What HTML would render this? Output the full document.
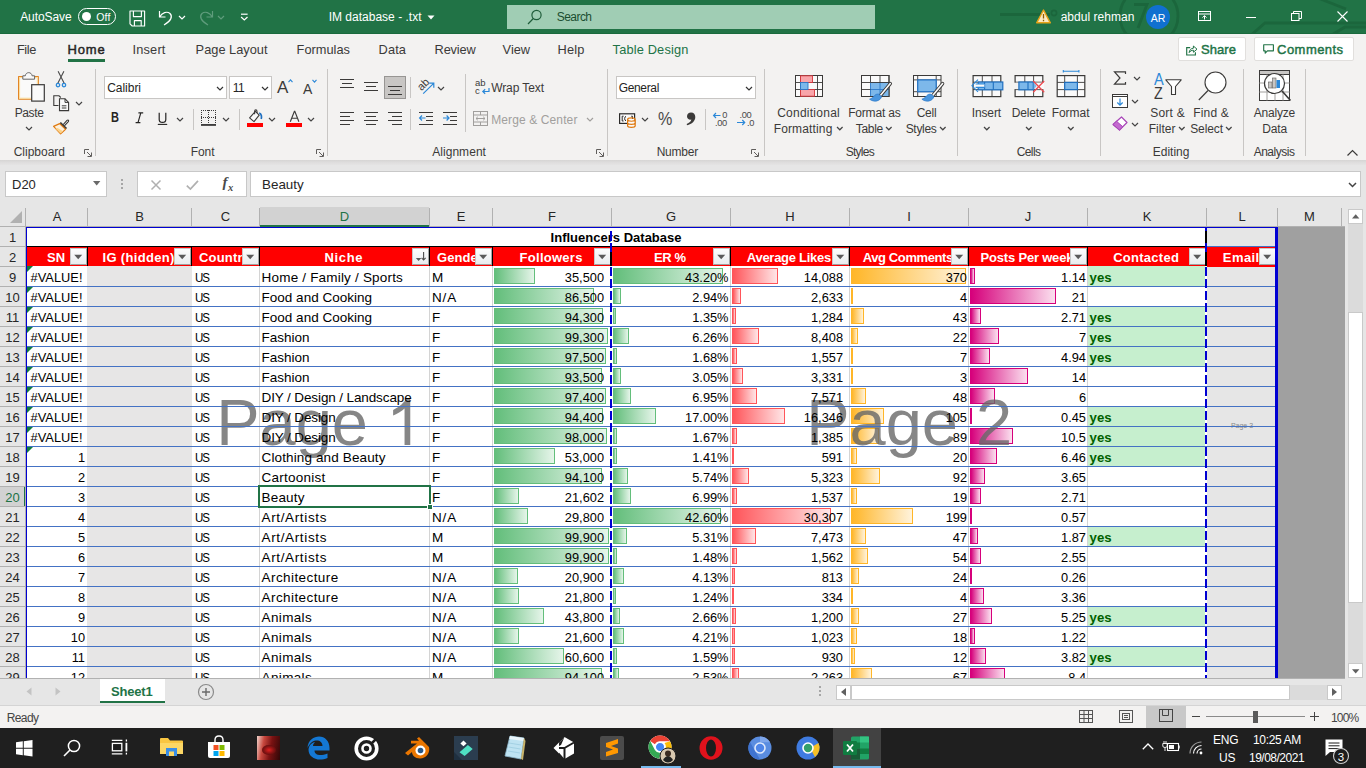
<!DOCTYPE html>
<html lang="en"><head><meta charset="utf-8"><title>IM database - Excel</title>
<style>
*{box-sizing:border-box}
html,body{margin:0;padding:0}
body{width:1366px;height:768px;overflow:hidden;position:relative;background:#f3f2f1;font-family:"Liberation Sans",sans-serif;font-size:12px;color:#262626}
.b{position:absolute;display:block}
.t{position:absolute;white-space:nowrap;line-height:1.3}
svg{overflow:visible}
</style></head>
<body>
<div class="b" style="left:0px;top:0px;width:1366px;height:34px;background:#217346;"></div>
<div class="b" style="left:0px;top:33px;width:1366px;height:1px;background:#1a6a3d;"></div>
<svg class="b" style="left:1000px;top:0" width="366" height="33" viewBox="0 0 366 33"><g fill="none" stroke="#1b663c" stroke-width="2.8"><circle cx="149" cy="16" r="29"/><path d="M0 14.5 H50"/><circle cx="54" cy="13" r="2.6" stroke-width="1.6"/><path d="M134 4.5 H147 L138 28"/><path d="M250 36 L265 23 H366 M330 36 L345 27 H366 M318 -2 L346 9"/></g></svg>
<div class="t" style="left:20.16px;top:10px;font-size:12px;color:#fff;letter-spacing:-0.087px;">AutoSave</div>
<div class="b" style="left:78px;top:8px;width:38px;height:17px;border:1px solid #fff;border-radius:9px;"></div>
<div class="b" style="left:82px;top:12px;width:9px;height:9px;background:#fff;border-radius:50%;"></div>
<div class="t" style="left:96.27px;top:11px;font-size:10.5px;color:#fff;letter-spacing:0.121px;">Off</div>
<svg class="b" style="left:129px;top:9.5px;" width="17" height="17" viewBox="0 0 17 17"><path d="M1 1 H15.6 V16 H3.2 L1 13.8 Z M4.4 1 V6.6 H12.4 V1 M5.4 16 V10.6 H12.2 V16" fill="none" stroke="#fff" stroke-width="1.15" stroke-linejoin="round"/></svg>
<svg class="b" style="left:158px;top:9px;" width="16" height="17" viewBox="0 0 16 17"><path d="M1.5 2 V8 H7.5 M1.8 7.8 C4 3.5 9 2 12 4.5 C15 7.5 13 12 6 16" fill="none" stroke="#fff" stroke-width="1.2"/></svg>
<svg class="b" style="left:178.0px;top:14.5px" width="8" height="5.0" viewBox="-1 -1 8 5.0"><path d="M0 0 L3.0 3.0 L6 0" fill="none" stroke="#fff" stroke-width="1.2"/></svg>
<svg class="b" style="left:198px;top:9px;" width="16" height="17" viewBox="0 0 16 17"><path d="M14.5 2 V8 H8.5 M14.2 7.8 C12 3.5 7 2 4 4.5 C1 7.5 3 12 10 16" fill="none" stroke="#5f9c7c" stroke-width="1.2"/></svg>
<svg class="b" style="left:217.0px;top:14.5px" width="8" height="5.0" viewBox="-1 -1 8 5.0"><path d="M0 0 L3.0 3.0 L6 0" fill="none" stroke="#5f9c7c" stroke-width="1.2"/></svg>
<svg class="b" style="left:239.5px;top:13px;" width="9" height="9" viewBox="0 0 9 9"><path d="M1 1.2 H7.6" stroke="#fff" stroke-width="1.2"/><path d="M1.1 4 L4.3 7 L7.5 4" fill="none" stroke="#fff" stroke-width="1.2"/></svg>
<div class="t" style="left:328.66px;top:10px;font-size:12px;color:#fff;letter-spacing:0.008px;">IM database - .txt</div>
<svg class="b" style="left:427px;top:15px" width="8" height="5"><path d="M0.5 0.5 H7.5 L4 4.5 Z" fill="#fff"/></svg>
<div class="b" style="left:507px;top:5px;width:368px;height:24px;background:#a0cdb4;"></div>
<svg class="b" style="left:527px;top:9px;" width="16" height="16" viewBox="0 0 16 16"><circle cx="9.5" cy="6" r="4.6" fill="none" stroke="#1f5c3a" stroke-width="1.2"/><path d="M6.3 9.5 L1 15" stroke="#1f5c3a" stroke-width="1.2"/></svg>
<div class="t" style="left:556.66px;top:10px;font-size:12px;color:#1b4d31;letter-spacing:-0.53px;">Search</div>
<svg class="b" style="left:1036px;top:9px;" width="15" height="15" viewBox="0 0 15 15"><path d="M7.5 1 L14.3 13.8 H0.7 Z" fill="#fce9c0" stroke="#e8a317" stroke-width="1.4" stroke-linejoin="round"/><path d="M7.5 5 V9.6 M7.5 10.8 V12.3" stroke="#8a5a00" stroke-width="1.3"/></svg>
<div class="t" style="left:1060.66px;top:10px;font-size:12px;color:#fff;letter-spacing:0.038px;">abdul rehman</div>
<div class="b" style="left:1146px;top:5px;width:24px;height:24px;background:#1070d0;border-radius:50%;"></div>
<div class="t" style="left:1146px;top:12px;font-size:10.5px;color:#fff;width:24px;text-align:center;">AR</div>
<svg class="b" style="left:1198px;top:11px;" width="13" height="10" viewBox="0 0 13 10"><rect x="0.5" y="0.5" width="12" height="9" fill="none" stroke="#fff"/><path d="M0.5 3 H12.5" stroke="#fff"/><path d="M6.5 8.5 V4.8 M4.5 6.6 L6.5 4.6 L8.5 6.6" fill="none" stroke="#fff"/></svg>
<div class="b" style="left:1246px;top:17px;width:10px;height:1px;background:#fff;"></div>
<svg class="b" style="left:1291px;top:11px;" width="11" height="10" viewBox="0 0 11 10"><rect x="0.5" y="2.5" width="7.5" height="7" fill="none" stroke="#fff"/><path d="M2.5 2.5 V0.5 H10.5 V7.5 H8" fill="none" stroke="#fff"/></svg>
<svg class="b" style="left:1337px;top:11px;" width="11" height="11" viewBox="0 0 11 11"><path d="M0.5 0.5 L10.5 10.5 M10.5 0.5 L0.5 10.5" stroke="#fff" stroke-width="1.1"/></svg>
<div class="b" style="left:0px;top:34px;width:1366px;height:30px;background:#f3f2f1;"></div>
<div class="t" style="left:16.9px;top:42px;font-size:12.8px;color:#3b3a39;letter-spacing:-0.373px;">File</div>
<div class="t" style="left:132.6px;top:42px;font-size:12.8px;color:#3b3a39;letter-spacing:0.153px;">Insert</div>
<div class="t" style="left:195.6px;top:42px;font-size:12.8px;color:#3b3a39;letter-spacing:0.005px;">Page Layout</div>
<div class="t" style="left:296.6px;top:42px;font-size:12.8px;color:#3b3a39;letter-spacing:0.011px;">Formulas</div>
<div class="t" style="left:378.6px;top:42px;font-size:12.8px;color:#3b3a39;letter-spacing:0.099px;">Data</div>
<div class="t" style="left:434.6px;top:42px;font-size:12.8px;color:#3b3a39;letter-spacing:-0.173px;">Review</div>
<div class="t" style="left:502.6px;top:42px;font-size:12.8px;color:#3b3a39;letter-spacing:-0.02px;">View</div>
<div class="t" style="left:557.6px;top:42px;font-size:12.8px;color:#3b3a39;letter-spacing:0.152px;">Help</div>
<div class="t" style="left:67.59px;top:42px;font-size:13px;color:#252423;letter-spacing:0.819px;-webkit-text-stroke:0.45px #252423;">Home</div>
<div class="b" style="left:68px;top:59px;width:37px;height:3px;background:#217346;"></div>
<div class="t" style="left:612.6px;top:42px;font-size:12.8px;color:#217346;letter-spacing:0.161px;">Table Design</div>
<div class="b" style="left:1178px;top:37px;width:68px;height:24px;background:#fff;border:1px solid #e1dfdd;border-radius:2px;"></div>
<svg class="b" style="left:1186px;top:43.5px;" width="12" height="12" viewBox="0 0 12 12"><path d="M4.2 3.6 H0.7 V11 H9.4 V8.2" fill="none" stroke="#217346" stroke-width="1.15"/><path d="M3.2 8.6 C3.4 5.8 5 4.4 7.4 4.2 V2 L11 5.2 L7.4 8.2 V6.2 C5.6 6.2 4.2 7 3.2 8.6 Z" fill="none" stroke="#217346" stroke-width="1" stroke-linejoin="round"/></svg>
<div class="t" style="left:1201.09px;top:42px;font-size:13px;color:#217346;letter-spacing:0.053px;-webkit-text-stroke:0.45px #217346;">Share</div>
<div class="b" style="left:1254px;top:37px;width:100px;height:24px;background:#fff;border:1px solid #e1dfdd;border-radius:2px;"></div>
<svg class="b" style="left:1262.5px;top:44px;" width="12" height="11" viewBox="0 0 12 11"><path d="M0.7 0.7 H10.4 V6.8 H4.4 L2.2 9.2 V6.8 H0.7 Z" fill="none" stroke="#217346" stroke-width="1.15" stroke-linejoin="round"/></svg>
<div class="t" style="left:1277.09px;top:42px;font-size:13px;color:#217346;letter-spacing:0.451px;-webkit-text-stroke:0.45px #217346;">Comments</div>
<div class="b" style="left:0px;top:64px;width:1366px;height:96px;background:#f3f2f1;"></div>
<div class="b" style="left:0px;top:160px;width:1366px;height:6px;background:linear-gradient(#d6d5d4,#e0dfdf 50%,#e6e6e6);"></div>
<div class="b" style="left:95px;top:69px;width:1px;height:87px;background:#c8c6c4;"></div>
<div class="b" style="left:327px;top:69px;width:1px;height:87px;background:#c8c6c4;"></div>
<div class="b" style="left:607px;top:69px;width:1px;height:87px;background:#c8c6c4;"></div>
<div class="b" style="left:764px;top:69px;width:1px;height:87px;background:#c8c6c4;"></div>
<div class="b" style="left:957px;top:69px;width:1px;height:87px;background:#c8c6c4;"></div>
<div class="b" style="left:1100px;top:69px;width:1px;height:87px;background:#c8c6c4;"></div>
<div class="b" style="left:1243px;top:69px;width:1px;height:87px;background:#c8c6c4;"></div>
<div class="b" style="left:1305px;top:69px;width:1px;height:87px;background:#c8c6c4;"></div>
<div class="t" style="left:13.66px;top:145px;font-size:12px;color:#3b3a39;letter-spacing:-0.002px;">Clipboard</div>
<div class="t" style="left:190.66px;top:145px;font-size:12px;color:#3b3a39;letter-spacing:-0.042px;">Font</div>
<div class="t" style="left:432.16px;top:145px;font-size:12px;color:#3b3a39;letter-spacing:0.053px;">Alignment</div>
<div class="t" style="left:656.66px;top:145px;font-size:12px;color:#3b3a39;letter-spacing:-0.223px;">Number</div>
<div class="t" style="left:845.66px;top:145px;font-size:12px;color:#3b3a39;letter-spacing:-0.722px;">Styles</div>
<div class="t" style="left:1016.66px;top:145px;font-size:12px;color:#3b3a39;letter-spacing:-0.566px;">Cells</div>
<div class="t" style="left:1152.66px;top:145px;font-size:12px;color:#3b3a39;letter-spacing:0.022px;">Editing</div>
<div class="t" style="left:1253.66px;top:145px;font-size:12px;color:#3b3a39;letter-spacing:-0.48px;">Analysis</div>
<svg class="b" style="left:84px;top:149px;" width="8" height="8" viewBox="0 0 8 8"><path d="M0.5 5 V0.5 H5" fill="none" stroke="#605e5c"/><path d="M3 3 L7 7 M7.5 3.5 V7.5 H3.5" fill="none" stroke="#605e5c"/></svg>
<svg class="b" style="left:316px;top:149px;" width="8" height="8" viewBox="0 0 8 8"><path d="M0.5 5 V0.5 H5" fill="none" stroke="#605e5c"/><path d="M3 3 L7 7 M7.5 3.5 V7.5 H3.5" fill="none" stroke="#605e5c"/></svg>
<svg class="b" style="left:596px;top:149px;" width="8" height="8" viewBox="0 0 8 8"><path d="M0.5 5 V0.5 H5" fill="none" stroke="#605e5c"/><path d="M3 3 L7 7 M7.5 3.5 V7.5 H3.5" fill="none" stroke="#605e5c"/></svg>
<svg class="b" style="left:751px;top:149px;" width="8" height="8" viewBox="0 0 8 8"><path d="M0.5 5 V0.5 H5" fill="none" stroke="#605e5c"/><path d="M3 3 L7 7 M7.5 3.5 V7.5 H3.5" fill="none" stroke="#605e5c"/></svg>
<svg class="b" style="left:1347px;top:150px;" width="11" height="6" viewBox="0 0 11 6"><path d="M0.5 5.5 L5.5 0.5 L10.5 5.5" fill="none" stroke="#3b3a39" stroke-width="1.2"/></svg>
<svg class="b" style="left:17px;top:71px;" width="29" height="31" viewBox="0 0 29 31"><rect x="1.6" y="5.6" width="19.7" height="22.6" fill="#fafafa" stroke="#e07a10" stroke-width="1"/><rect x="2.6" y="6.6" width="17.7" height="20.6" fill="none" stroke="#fbdc9a" stroke-width="1"/><path d="M5.8 8.2 V4.8 H8.3 C8.8 0.6 14.6 0.6 15.1 4.8 H17.6 V8.2 Z" fill="#f8f8f8" stroke="#666" stroke-width="1"/><rect x="14.7" y="13.7" width="12.6" height="16.4" fill="#fafafa" stroke="#3b3a39" stroke-width="1.2"/></svg>
<div class="t" style="left:14.66px;top:106px;font-size:12px;color:#3b3a39;letter-spacing:-0.368px;">Paste</div>
<svg class="b" style="left:24.5px;top:126.0px" width="8" height="5.0" viewBox="-1 -1 8 5.0"><path d="M0 0 L3.0 3.0 L6 0" fill="none" stroke="#444" stroke-width="1.2"/></svg>
<svg class="b" style="left:55px;top:71px;" width="12" height="17" viewBox="0 0 12 17"><path d="M3.1 0.3 L9.3 12.4 M8.9 0.3 L2.7 12.4" stroke="#4a4a4a" stroke-width="1.1" fill="none"/><circle cx="3" cy="14.1" r="1.7" fill="none" stroke="#2b88d8" stroke-width="1.3"/><circle cx="9" cy="14.1" r="1.7" fill="none" stroke="#2b88d8" stroke-width="1.3"/></svg>
<svg class="b" style="left:53px;top:95px;" width="17" height="17" viewBox="0 0 17 17"><path d="M5.5 10.5 H0.8 V0.8 H6 L7.8 2.5" fill="none" stroke="#3b3a39" stroke-width="1.1"/><path d="M6.5 3.8 H12 L15.6 7.4 V15.6 H6.5 Z" fill="#fafafa" stroke="#3b3a39" stroke-width="1.1"/><path d="M12 3.8 V7.4 H15.6 M8.8 10.8 H13.4 M8.8 13 H13.4" fill="none" stroke="#3b3a39" stroke-width="1"/></svg>
<svg class="b" style="left:74.5px;top:100.5px" width="8" height="5.0" viewBox="-1 -1 8 5.0"><path d="M0 0 L3.0 3.0 L6 0" fill="none" stroke="#444" stroke-width="1.2"/></svg>
<svg class="b" style="left:53px;top:118px;" width="17" height="17" viewBox="0 0 17 17"><path d="M10.2 6.6 L14 2.4 C15 1.4 16.2 2.6 15.3 3.7 L11.4 7.8" fill="#fafafa" stroke="#3b3a39" stroke-width="1.1"/><path d="M7.2 4.6 L13.4 10.6" stroke="#3b3a39" stroke-width="2"/><path d="M6.6 5.6 L0.6 8.4 L7.6 15.8 L12.6 11.4 Z" fill="#fdf1de" stroke="#e07a10" stroke-width="1.2" stroke-linejoin="round"/><path d="M2.4 10.6 L7.6 15.4 L10 13.2 L4.6 10 Z" fill="#fbd28a"/></svg>
<div class="b" style="left:104px;top:76px;width:123px;height:23px;background:#fff;border:1px solid #c8c6c4;"></div>
<div class="t" style="left:107.16px;top:81px;font-size:12px;color:#252423;letter-spacing:-0.024px;">Calibri</div>
<svg class="b" style="left:216.0px;top:85.5px" width="8" height="5.0" viewBox="-1 -1 8 5.0"><path d="M0 0 L3.0 3.0 L6 0" fill="none" stroke="#333" stroke-width="1.2"/></svg>
<div class="b" style="left:229px;top:76px;width:43px;height:23px;background:#fff;border:1px solid #c8c6c4;"></div>
<div class="t" style="left:232.66px;top:81px;font-size:12px;color:#252423;letter-spacing:-0.557px;">11</div>
<svg class="b" style="left:260.5px;top:85.5px" width="8" height="5.0" viewBox="-1 -1 8 5.0"><path d="M0 0 L3.0 3.0 L6 0" fill="none" stroke="#333" stroke-width="1.2"/></svg>
<div class="t" style="left:277px;top:77px;font-size:17px;color:#3b3a39;">A</div>
<svg class="b" style="left:288px;top:79px;" width="5" height="4" viewBox="0 0 5 4"><path d="M0.5 3.2 L2.5 0.8 L4.5 3.2" fill="none" stroke="#2b88d8" stroke-width="1.1"/></svg>
<div class="t" style="left:303px;top:80px;font-size:14px;color:#3b3a39;">A</div>
<svg class="b" style="left:312px;top:79px;" width="5" height="4" viewBox="0 0 5 4"><path d="M0.5 0.8 L2.5 3.2 L4.5 0.8" fill="none" stroke="#2b88d8" stroke-width="1.1"/></svg>
<div class="t" style="left:111.2px;top:108.5px;font-size:13.8px;color:#252423;font-weight:700;transform:scaleX(0.8);transform-origin:0 0;">B</div>
<svg class="b" style="left:135px;top:112px;" width="9" height="12" viewBox="0 0 9 12"><path d="M3.4 0.9 H8.2 M0.6 10.6 H5.4 M5.8 0.9 L3 10.6" fill="none" stroke="#252423" stroke-width="1.15"/></svg>
<svg class="b" style="left:157px;top:112px;" width="11" height="14" viewBox="0 0 11 14"><path d="M2.2 0.8 V7.4 C2.2 11.3 8.8 11.3 8.8 7.4 V0.8" fill="none" stroke="#252423" stroke-width="1.2"/><path d="M0.8 12.4 H10.2" stroke="#252423" stroke-width="1.1"/></svg>
<svg class="b" style="left:176.0px;top:116.5px" width="8" height="5.0" viewBox="-1 -1 8 5.0"><path d="M0 0 L3.0 3.0 L6 0" fill="none" stroke="#444" stroke-width="1.2"/></svg>
<div class="b" style="left:193px;top:109px;width:1px;height:21px;background:#c8c6c4;"></div>
<svg class="b" style="left:201px;top:110px;" width="16" height="16" viewBox="0 0 16 16"><path d="M0 0.5 H15 M0 7.5 H15" fill="none" stroke="#3b3a39" stroke-width="1" stroke-dasharray="1 1"/><path d="M0.5 0 V13 M7.5 0 V13 M14.5 0 V13" fill="none" stroke="#3b3a39" stroke-width="1" stroke-dasharray="1 1"/><rect x="0" y="14.2" width="15" height="1.5" fill="#111"/></svg>
<svg class="b" style="left:222.0px;top:116.5px" width="8" height="5.0" viewBox="-1 -1 8 5.0"><path d="M0 0 L3.0 3.0 L6 0" fill="none" stroke="#444" stroke-width="1.2"/></svg>
<div class="b" style="left:239px;top:109px;width:1px;height:21px;background:#c8c6c4;"></div>
<svg class="b" style="left:247px;top:108px;" width="16" height="20" viewBox="0 0 16 20"><path d="M2.6 9.8 L8.4 3.4 L12.2 7.2 L7 13.6 Z" fill="#fafafa" stroke="#3b3a39" stroke-width="1.1" stroke-linejoin="round"/><path d="M7.6 6.2 V3.4 C7.6 1.4 10 1.4 10 3.4 V5" fill="none" stroke="#3b3a39" stroke-width="1.1"/><path d="M12.2 5.2 C14.6 5.6 14.8 8.8 14.2 11" fill="none" stroke="#1e6fc0" stroke-width="1.7"/><rect x="0" y="15" width="16" height="4" fill="#ff0000"/></svg>
<svg class="b" style="left:268.0px;top:116.5px" width="8" height="5.0" viewBox="-1 -1 8 5.0"><path d="M0 0 L3.0 3.0 L6 0" fill="none" stroke="#444" stroke-width="1.2"/></svg>
<svg class="b" style="left:286px;top:108px;" width="16" height="20" viewBox="0 0 16 20"><path d="M4.3 13.8 L8.4 3.2 H8.8 L12.9 13.8 M5.7 10.2 H11.5" fill="none" stroke="#3b3a39" stroke-width="1.15"/><rect x="0" y="15" width="16" height="4" fill="#ff0000"/></svg>
<svg class="b" style="left:307.0px;top:116.5px" width="8" height="5.0" viewBox="-1 -1 8 5.0"><path d="M0 0 L3.0 3.0 L6 0" fill="none" stroke="#444" stroke-width="1.2"/></svg>
<div class="b" style="left:384px;top:76px;width:22px;height:23px;background:#c8c6c4;border:1px solid #979593;"></div>
<div class="b" style="left:340px;top:79px;width:14px;height:1px;background:#3b3a39;"></div><div class="b" style="left:342px;top:83px;width:10px;height:1px;background:#3b3a39;"></div><div class="b" style="left:340px;top:87px;width:14px;height:1px;background:#3b3a39;"></div>
<div class="b" style="left:364px;top:82px;width:14px;height:1px;background:#3b3a39;"></div><div class="b" style="left:366px;top:86px;width:10px;height:1px;background:#3b3a39;"></div><div class="b" style="left:364px;top:90px;width:14px;height:1px;background:#3b3a39;"></div>
<div class="b" style="left:388px;top:86px;width:14px;height:1px;background:#3b3a39;"></div><div class="b" style="left:390px;top:90px;width:10px;height:1px;background:#3b3a39;"></div><div class="b" style="left:388px;top:94px;width:14px;height:1px;background:#3b3a39;"></div>
<div class="b" style="left:410px;top:77px;width:1px;height:21px;background:#c8c6c4;"></div>
<div class="t" style="left:417px;top:77px;font-size:11px;color:#3b3a39;transform:rotate(-45deg);transform-origin:50% 50%;">ab</div>
<svg class="b" style="left:422px;top:82px;" width="13" height="13" viewBox="0 0 13 13"><path d="M1.2 11.6 L11.4 1.6 M7.2 1.2 H11.8 V5.8" fill="none" stroke="#2b88d8" stroke-width="1.2"/></svg>
<svg class="b" style="left:437.0px;top:85.5px" width="8" height="5.0" viewBox="-1 -1 8 5.0"><path d="M0 0 L3.0 3.0 L6 0" fill="none" stroke="#444" stroke-width="1.2"/></svg>
<div class="b" style="left:465px;top:74px;width:1px;height:58px;background:#c8c6c4;"></div>
<div class="t" style="left:475px;top:77px;font-size:9.5px;color:#3b3a39;">ab</div>
<div class="t" style="left:475px;top:85px;font-size:9.5px;color:#3b3a39;">c</div>
<svg class="b" style="left:481px;top:88px;" width="9" height="8" viewBox="0 0 9 8"><path d="M8 0 V3.5 H2 M4.2 1.2 L1.8 3.5 L4.2 5.8" fill="none" stroke="#2b88d8" stroke-width="1.2"/></svg>
<div class="t" style="left:491.16px;top:81px;font-size:12px;color:#3b3a39;letter-spacing:-0.082px;">Wrap Text</div>
<div class="b" style="left:340px;top:112px;width:14px;height:1px;background:#3b3a39;"></div><div class="b" style="left:340px;top:116px;width:10px;height:1px;background:#3b3a39;"></div><div class="b" style="left:340px;top:120px;width:14px;height:1px;background:#3b3a39;"></div><div class="b" style="left:340px;top:124px;width:10px;height:1px;background:#3b3a39;"></div>
<div class="b" style="left:364px;top:112px;width:14px;height:1px;background:#3b3a39;"></div><div class="b" style="left:366px;top:116px;width:10px;height:1px;background:#3b3a39;"></div><div class="b" style="left:364px;top:120px;width:14px;height:1px;background:#3b3a39;"></div><div class="b" style="left:366px;top:124px;width:10px;height:1px;background:#3b3a39;"></div>
<div class="b" style="left:388px;top:112px;width:14px;height:1px;background:#3b3a39;"></div><div class="b" style="left:392px;top:116px;width:10px;height:1px;background:#3b3a39;"></div><div class="b" style="left:388px;top:120px;width:14px;height:1px;background:#3b3a39;"></div><div class="b" style="left:392px;top:124px;width:10px;height:1px;background:#3b3a39;"></div>
<div class="b" style="left:410px;top:109px;width:1px;height:21px;background:#c8c6c4;"></div>
<div class="b" style="left:419px;top:112px;width:14px;height:1px;background:#3b3a39;"></div><div class="b" style="left:426px;top:116px;width:7px;height:1px;background:#3b3a39;"></div><div class="b" style="left:426px;top:120px;width:7px;height:1px;background:#3b3a39;"></div><div class="b" style="left:419px;top:124px;width:14px;height:1px;background:#3b3a39;"></div>
<svg class="b" style="left:419px;top:114px;" width="7" height="8" viewBox="0 0 7 8"><path d="M6.5 4 H0.8 M3 1.5 L0.6 4 L3 6.5" fill="none" stroke="#2b88d8" stroke-width="1.2"/></svg>
<div class="b" style="left:443px;top:112px;width:14px;height:1px;background:#3b3a39;"></div><div class="b" style="left:450px;top:116px;width:7px;height:1px;background:#3b3a39;"></div><div class="b" style="left:450px;top:120px;width:7px;height:1px;background:#3b3a39;"></div><div class="b" style="left:443px;top:124px;width:14px;height:1px;background:#3b3a39;"></div>
<svg class="b" style="left:443px;top:114px;" width="7" height="8" viewBox="0 0 7 8"><path d="M0 4 H5.8 M3.6 1.5 L6 4 L3.6 6.5" fill="none" stroke="#2b88d8" stroke-width="1.2"/></svg>
<svg class="b" style="left:473px;top:111px;" width="15" height="15" viewBox="0 0 15 15"><rect x="0.5" y="0.5" width="14" height="14" fill="none" stroke="#a19f9d"/><path d="M0.5 4 H14.5 M0.5 11 H14.5 M7.5 0.5 V4 M7.5 11 V14.5 M3 7.5 H12 M4.8 5.8 L3 7.5 L4.8 9.2 M10.2 5.8 L12 7.5 L10.2 9.2" fill="none" stroke="#a19f9d"/></svg>
<div class="t" style="left:491.16px;top:113px;font-size:12px;color:#a19f9d;letter-spacing:0.117px;">Merge &amp; Center</div>
<svg class="b" style="left:586.0px;top:116.5px" width="8" height="5.0" viewBox="-1 -1 8 5.0"><path d="M0 0 L3.0 3.0 L6 0" fill="none" stroke="#a19f9d" stroke-width="1.2"/></svg>
<div class="b" style="left:616px;top:76px;width:140px;height:23px;background:#fff;border:1px solid #c8c6c4;"></div>
<div class="t" style="left:618.66px;top:81px;font-size:12px;color:#252423;letter-spacing:-0.336px;">General</div>
<svg class="b" style="left:745.0px;top:85.5px" width="8" height="5.0" viewBox="-1 -1 8 5.0"><path d="M0 0 L3.0 3.0 L6 0" fill="none" stroke="#333" stroke-width="1.2"/></svg>
<svg class="b" style="left:618.5px;top:113px;" width="18" height="16" viewBox="0 0 18 16"><rect x="0.6" y="0.8" width="15" height="9.6" fill="#fafafa" stroke="#2b2a29" stroke-width="1.2"/><path d="M3.2 3.2 H4.6 M3.2 3.2 V8 M3.2 8 H4.6 M7 3.4 C5.2 3.4 5.2 7.8 7 7.8 M12.2 3.2 H13.4 V6" fill="none" stroke="#2b2a29" stroke-width="1"/><path d="M8.6 6.4 V12.8 C8.6 15 16.2 15 16.2 12.8 V6.4 Z" fill="#fafafa" stroke="none"/><path d="M8.6 6.6 V12.8 C8.6 15 16.2 15 16.2 12.8 V6.6 C16.2 4.4 8.6 4.4 8.6 6.6 C8.6 8.8 16.2 8.8 16.2 6.6 M8.6 9.7 C8.6 11.9 16.2 11.9 16.2 9.7" fill="none" stroke="#e07a10" stroke-width="1.2"/></svg>
<svg class="b" style="left:640.5px;top:116.5px" width="8" height="5.0" viewBox="-1 -1 8 5.0"><path d="M0 0 L3.0 3.0 L6 0" fill="none" stroke="#444" stroke-width="1.2"/></svg>
<div class="t" style="left:657.5px;top:108px;font-size:17.5px;color:#4a4a4a;transform:scaleX(0.92);transform-origin:0 0;">%</div>
<svg class="b" style="left:686px;top:112px;" width="10" height="14" viewBox="0 0 10 14"><path d="M5 0.5 C7.8 0.5 9.3 2.6 9.3 5 C9.3 9 6 12.3 1 13.2 L0.7 12 C3.4 11 5 9.6 5.3 7.6 C3 8 1 6.6 1 4.3 C1 2 2.8 0.5 5 0.5 Z" fill="#3b3a39"/></svg>
<div class="b" style="left:705px;top:109px;width:1px;height:21px;background:#c8c6c4;"></div>
<div class="t" style="left:722.3px;top:109px;font-size:9.3px;color:#4a4a4a;">0</div>
<div class="t" style="left:715px;top:117.3px;font-size:9.3px;color:#4a4a4a;letter-spacing:-0.4px;">.00</div>
<svg class="b" style="left:713px;top:112px;" width="8" height="7" viewBox="0 0 8 7"><path d="M7.5 3.5 H0.8 M3 1 L0.6 3.5 L3 6" fill="none" stroke="#2b88d8" stroke-width="1.2"/></svg>
<div class="t" style="left:739.5px;top:109px;font-size:9.3px;color:#4a4a4a;letter-spacing:-0.4px;">.00</div>
<div class="t" style="left:747px;top:117.3px;font-size:9.3px;color:#4a4a4a;letter-spacing:-0.4px;">.0</div>
<svg class="b" style="left:737px;top:119px;" width="9" height="7" viewBox="0 0 9 7"><path d="M0 3.5 H7.5 M5.3 1 L7.7 3.5 L5.3 6" fill="none" stroke="#2b88d8" stroke-width="1.2"/></svg>
<svg class="b" style="left:795px;top:75px;" width="28" height="22" viewBox="0 0 28 22"><rect x="0.5" y="0.5" width="27" height="21" fill="#fafafa" stroke="#3b3a39"/><path d="M5.5 0.5 V21.5 M22.5 0.5 V21.5 M0.5 7.5 H27.5 M0.5 14.5 H27.5" stroke="#3b3a39" stroke-width="0.9" fill="none"/><rect x="5.5" y="0.8" width="12" height="6.7" fill="#f8a5aa" stroke="#d8343a" stroke-width="0.9"/><rect x="5.5" y="14.5" width="14" height="6.7" fill="#f8a5aa" stroke="#d8343a" stroke-width="0.9"/><rect x="5.5" y="7.5" width="7.5" height="7" fill="#7db8ea" stroke="#2b78c8" stroke-width="0.9"/></svg>
<div class="t" style="left:777.16px;top:106px;font-size:12px;color:#3b3a39;letter-spacing:0.255px;">Conditional</div>
<div class="t" style="left:773.66px;top:122px;font-size:12px;color:#3b3a39;letter-spacing:0.149px;">Formatting</div>
<svg class="b" style="left:835.7px;top:126.19999999999999px" width="7.6" height="4.8" viewBox="-1 -1 7.6 4.8"><path d="M0 0 L2.8 2.8 L5.6 0" fill="none" stroke="#444" stroke-width="1.2"/></svg>
<svg class="b" style="left:861px;top:75px;" width="32" height="28" viewBox="0 0 32 28"><rect x="0.5" y="0.5" width="27.5" height="21" fill="#fafafa" stroke="#3b3a39"/><rect x="9.5" y="7.5" width="18.5" height="14" fill="#7db8ea"/><path d="M9.5 7.5 H28 M9.5 14.5 H28 M19 7.5 V21.5 M9.5 7.5 V21.5" stroke="#2b78c8" stroke-width="0.9" fill="none"/><path d="M0.5 7.5 H9.5 M0.5 14.5 H9.5 M9.5 0.5 V7.5 M19 0.5 V7.5 M9.5 7.5 H28" stroke="#3b3a39" stroke-width="0.9" fill="none"/><rect x="0.5" y="0.5" width="27.5" height="21" fill="none" stroke="#3b3a39"/><path d="M29.3 8.6 L19.4 20.6" stroke="#3b3a39" stroke-width="3.4" stroke-linecap="round"/><path d="M29.3 8.6 L19.4 20.6" stroke="#fafafa" stroke-width="1.6" stroke-linecap="round"/><path d="M17.6 19.2 C13.6 18.4 13.4 22.5 8.6 24.2 C12.6 27.6 19.6 26.4 20.6 21.4 Z" fill="#4a96de" stroke="#2b78c8" stroke-width="0.7"/></svg>
<div class="t" style="left:848.16px;top:106px;font-size:12px;color:#3b3a39;letter-spacing:-0.185px;">Format as</div>
<div class="t" style="left:855.66px;top:122px;font-size:12px;color:#3b3a39;letter-spacing:-0.269px;">Table</div>
<svg class="b" style="left:884.7px;top:126.19999999999999px" width="7.6" height="4.8" viewBox="-1 -1 7.6 4.8"><path d="M0 0 L2.8 2.8 L5.6 0" fill="none" stroke="#444" stroke-width="1.2"/></svg>
<svg class="b" style="left:913px;top:75px;" width="32" height="28" viewBox="0 0 32 28"><rect x="0.5" y="0.5" width="27.5" height="21" fill="#fafafa" stroke="#3b3a39"/><path d="M4.7 0.5 V21.5 M23.2 0.5 V21.5 M0.5 4.9 H28 M0.5 16.7 H28" stroke="#3b3a39" stroke-width="0.9" fill="none"/><rect x="4.7" y="4.9" width="18.5" height="11.8" fill="#7db8ea" stroke="#2b78c8" stroke-width="1.3"/><path d="M29.6 8.6 L19.7 20.6" stroke="#3b3a39" stroke-width="3.4" stroke-linecap="round"/><path d="M29.6 8.6 L19.7 20.6" stroke="#fafafa" stroke-width="1.6" stroke-linecap="round"/><path d="M17.9 19.2 C13.9 18.4 13.7 22.5 8.9 24.2 C12.9 27.6 19.9 26.4 20.9 21.4 Z" fill="#4a96de" stroke="#2b78c8" stroke-width="0.7"/></svg>
<div class="t" style="left:916.66px;top:106px;font-size:12px;color:#3b3a39;letter-spacing:-0.207px;">Cell</div>
<div class="t" style="left:905.66px;top:122px;font-size:12px;color:#3b3a39;letter-spacing:-0.306px;">Styles</div>
<svg class="b" style="left:938.7px;top:126.19999999999999px" width="7.6" height="4.8" viewBox="-1 -1 7.6 4.8"><path d="M0 0 L2.8 2.8 L5.6 0" fill="none" stroke="#444" stroke-width="1.2"/></svg>
<svg class="b" style="left:971px;top:75px;" width="32" height="22" viewBox="0 0 32 22"><rect x="2.1" y="0.6" width="27.7" height="21" fill="#fafafa" stroke="#3b3a39" stroke-width="1.2"/><path d="M11.3 0.6 V21.6 M21 0.6 V21.6 M2.1 7.2 H29.8 M2.1 14.6 H29.8" stroke="#3b3a39" stroke-width="0.9" fill="none"/><rect x="7.2" y="7" width="24.6" height="7.8" fill="#7db8ea" stroke="#1e6fc0" stroke-width="1.2"/><path d="M13.6 7 V14.8 M22.3 7 V14.8" stroke="#1e6fc0" stroke-width="1.1"/><rect x="4" y="9" width="9.4" height="3.4" fill="#fafafa"/><path d="M13.4 9 H4.6 M13.4 12.4 H4.6 M7 4.6 L0.9 10.7 L7 16.8" fill="none" stroke="#2b88d8" stroke-width="1.1" stroke-linejoin="round"/></svg>
<div class="t" style="left:971.66px;top:106px;font-size:12px;color:#3b3a39;letter-spacing:-0.111px;">Insert</div>
<svg class="b" style="left:982.8000000000001px;top:126.19999999999999px" width="7.6" height="4.8" viewBox="-1 -1 7.6 4.8"><path d="M0 0 L2.8 2.8 L5.6 0" fill="none" stroke="#444" stroke-width="1.2"/></svg>
<svg class="b" style="left:1014px;top:75px;" width="32" height="22" viewBox="0 0 32 22"><rect x="1.1" y="0.6" width="27.7" height="21" fill="#fafafa" stroke="#3b3a39" stroke-width="1.2"/><path d="M10.8 0.6 V21.6 M19.6 0.6 V21.6 M1.1 7.2 H28.8 M1.1 14.6 H28.8" stroke="#3b3a39" stroke-width="0.9" fill="none"/><rect x="0" y="7.7" width="4.4" height="6.4" fill="#f3f2f1"/><rect x="21" y="7.7" width="9" height="6.4" fill="#fafafa"/><rect x="4.9" y="7" width="14.4" height="7.8" fill="#7db8ea" stroke="#1e6fc0" stroke-width="1.2"/><path d="M14 7 V14.8" stroke="#1e6fc0" stroke-width="1.1"/><path d="M19.6 7 L22.6 10.9 L19.6 14.8 Z" fill="#7db8ea"/><path d="M19.2 6 L30.2 17.2 M30.2 6 L19.2 17.2" stroke="#f04a50" stroke-width="1.3"/></svg>
<div class="t" style="left:1011.66px;top:106px;font-size:12px;color:#3b3a39;letter-spacing:-0.141px;">Delete</div>
<svg class="b" style="left:1024.7px;top:126.19999999999999px" width="7.6" height="4.8" viewBox="-1 -1 7.6 4.8"><path d="M0 0 L2.8 2.8 L5.6 0" fill="none" stroke="#444" stroke-width="1.2"/></svg>
<svg class="b" style="left:1056px;top:75px;" width="32" height="22" viewBox="0 0 32 22"><rect x="1.2" y="0.6" width="27.6" height="21" fill="#fafafa" stroke="#3b3a39" stroke-width="1.2"/><path d="M8.7 0.6 V21.6 M21.4 0.6 V21.6 M1.2 7.4 H28.8 M1.2 14.6 H28.8" stroke="#3b3a39" stroke-width="0.9" fill="none"/><rect x="8.7" y="7.4" width="12.7" height="7.2" fill="#7db8ea" stroke="#1e6fc0" stroke-width="1.2"/><path d="M7.3 -3.7 H22.9 M7.3 -5 V-2.4 M22.9 -5 V-2.4" stroke="#2b88d8" stroke-width="1.1" fill="none"/></svg>
<div class="t" style="left:1051.66px;top:106px;font-size:12px;color:#3b3a39;letter-spacing:-0.027px;">Format</div>
<svg class="b" style="left:1066.7px;top:126.19999999999999px" width="7.6" height="4.8" viewBox="-1 -1 7.6 4.8"><path d="M0 0 L2.8 2.8 L5.6 0" fill="none" stroke="#444" stroke-width="1.2"/></svg>
<svg class="b" style="left:1113px;top:71px;" width="14" height="14" viewBox="0 0 14 14"><path d="M12.5 3 V0.8 H1.5 L7 7 L1.5 13.2 H12.5 V11" fill="none" stroke="#3b3a39" stroke-width="1.2"/></svg>
<svg class="b" style="left:1133.0px;top:75.5px" width="8" height="5.0" viewBox="-1 -1 8 5.0"><path d="M0 0 L3.0 3.0 L6 0" fill="none" stroke="#444" stroke-width="1.2"/></svg>
<svg class="b" style="left:1112px;top:94px;" width="16" height="14" viewBox="0 0 16 14"><rect x="0.5" y="0.5" width="15" height="13" fill="#fff" stroke="#3b3a39"/><path d="M0.5 2.5 H15.5" stroke="#3b3a39"/><path d="M8 4.5 V11 M5.3 8.5 L8 11.2 L10.7 8.5" fill="none" stroke="#2b88d8" stroke-width="1.2"/></svg>
<svg class="b" style="left:1131.0px;top:98.5px" width="8" height="5.0" viewBox="-1 -1 8 5.0"><path d="M0 0 L3.0 3.0 L6 0" fill="none" stroke="#444" stroke-width="1.2"/></svg>
<svg class="b" style="left:1112px;top:116px;" width="16" height="15" viewBox="0 0 16 15"><path d="M9.5 1 L15 6.5 L7.5 14 L1 8.5 Z" fill="#fff" stroke="#a846b8" stroke-width="1.2" stroke-linejoin="round"/><path d="M4.5 5.2 L10.8 10.8 L7.5 14 L1 8.5 Z" fill="#c46ad0" stroke="#a846b8" stroke-width="1" stroke-linejoin="round"/></svg>
<svg class="b" style="left:1131.0px;top:121.5px" width="8" height="5.0" viewBox="-1 -1 8 5.0"><path d="M0 0 L3.0 3.0 L6 0" fill="none" stroke="#444" stroke-width="1.2"/></svg>
<div class="t" style="left:1153.6px;top:69px;font-size:16.6px;color:#2b88d8;transform:scaleX(0.88);transform-origin:0 0;">A</div>
<div class="t" style="left:1154px;top:83px;font-size:16.6px;color:#3b3a39;transform:scaleX(0.86);transform-origin:0 0;">Z</div>
<svg class="b" style="left:1165px;top:79px;" width="17" height="17" viewBox="0 0 17 17"><path d="M0.8 0.8 H16.2 L10.5 7.5 V15.5 H6.5 V7.5 Z" fill="#fff" stroke="#3b3a39" stroke-width="1.1" stroke-linejoin="round"/></svg>
<div class="t" style="left:1150.16px;top:106px;font-size:12px;color:#3b3a39;letter-spacing:0.25px;">Sort &amp;</div>
<div class="t" style="left:1148.66px;top:122px;font-size:12px;color:#3b3a39;letter-spacing:0.029px;">Filter</div>
<svg class="b" style="left:1177.7px;top:126.19999999999999px" width="7.6" height="4.8" viewBox="-1 -1 7.6 4.8"><path d="M0 0 L2.8 2.8 L5.6 0" fill="none" stroke="#444" stroke-width="1.2"/></svg>
<svg class="b" style="left:1198px;top:71px;" width="29" height="30" viewBox="0 0 29 30"><circle cx="17.5" cy="11.5" r="10.5" fill="#fff" stroke="#3b3a39" stroke-width="1.1"/><path d="M10 19.5 L0.8 29" stroke="#3b3a39" stroke-width="1.2"/></svg>
<div class="t" style="left:1193.16px;top:106px;font-size:12px;color:#3b3a39;letter-spacing:0.194px;">Find &amp;</div>
<div class="t" style="left:1190.16px;top:122px;font-size:12px;color:#3b3a39;letter-spacing:-0.085px;">Select</div>
<svg class="b" style="left:1224.7px;top:126.19999999999999px" width="7.6" height="4.8" viewBox="-1 -1 7.6 4.8"><path d="M0 0 L2.8 2.8 L5.6 0" fill="none" stroke="#444" stroke-width="1.2"/></svg>
<svg class="b" style="left:1259px;top:70px;" width="32" height="32" viewBox="0 0 32 32"><rect x="0.5" y="0.5" width="30" height="30" fill="#fff" stroke="#3b3a39"/><rect x="0.5" y="0.5" width="30" height="4" fill="#c8c6c4" stroke="#3b3a39"/><path d="M0.5 13 H30.5 M0.5 22 H30.5 M8 4.5 V30.5 M16 4.5 V30.5 M24 4.5 V30.5" stroke="#a19f9d" fill="none"/><circle cx="15.5" cy="13.5" r="10" fill="#fff" stroke="#3b3a39" stroke-width="1.2"/><rect x="9.5" y="12" width="3.5" height="6" fill="#c8c6c4" stroke="#605e5c" stroke-width="0.6"/><rect x="13.5" y="8" width="3.5" height="10" fill="#c8c6c4" stroke="#605e5c" stroke-width="0.6"/><rect x="17.5" y="10" width="3.5" height="8" fill="#2b88d8"/><path d="M23 21 L31.5 30.5" stroke="#3b3a39" stroke-width="1.6"/></svg>
<div class="t" style="left:1253.66px;top:106px;font-size:12px;color:#3b3a39;letter-spacing:-0.193px;">Analyze</div>
<div class="t" style="left:1262.16px;top:122px;font-size:12px;color:#3b3a39;letter-spacing:-0.126px;">Data</div>
<div class="b" style="left:0px;top:165px;width:1366px;height:42px;background:#e6e6e6;"></div>
<div class="b" style="left:5px;top:171px;width:102px;height:26px;background:#fff;border:1px solid #c8c8c8;"></div>
<div class="t" style="left:12px;top:176px;font-size:13px;color:#262626;line-height:17px;">D20</div>
<svg class="b" style="left:93px;top:181px" width="8" height="5"><path d="M0 0 H7.4 L3.7 4.4 Z" fill="#6a6a6a"/></svg>
<div class="b" style="left:121px;top:179px;width:2px;height:2px;background:#a6a6a6;"></div>
<div class="b" style="left:121px;top:183px;width:2px;height:2px;background:#a6a6a6;"></div>
<div class="b" style="left:121px;top:187px;width:2px;height:2px;background:#a6a6a6;"></div>
<div class="b" style="left:137px;top:171px;width:110px;height:26px;background:#fff;border:1px solid #c8c8c8;"></div>
<svg class="b" style="left:150.5px;top:179.5px;" width="10" height="10" viewBox="0 0 10 10"><path d="M0.5 0.5 L9.5 9.5 M9.5 0.5 L0.5 9.5" stroke="#b0b0b0" stroke-width="1.5"/></svg>
<svg class="b" style="left:186px;top:179.5px;" width="13" height="10" viewBox="0 0 13 10"><path d="M0.8 5.6 L4.4 9 L12 0.8" fill="none" stroke="#b0b0b0" stroke-width="1.7"/></svg>
<div class="t" style="left:222.5px;top:174px;font-size:15px;color:#4a4a4a;font-weight:700;font-family:'Liberation Serif',serif;font-style:italic;line-height:17px;">f</div>
<div class="t" style="left:228px;top:179px;font-size:10.5px;color:#4a4a4a;font-weight:700;font-family:'Liberation Serif',serif;font-style:italic;line-height:17px;">x</div>
<div class="b" style="left:250px;top:171px;width:1111px;height:26px;background:#fff;border:1px solid #c8c8c8;"></div>
<div class="t" style="left:262px;top:176px;font-size:13.4px;color:#262626;line-height:17px;">Beauty</div>
<svg class="b" style="left:1347.5px;top:181.75px" width="9" height="5.5" viewBox="-1 -1 9 5.5"><path d="M0 0 L3.5 3.5 L7 0" fill="none" stroke="#444" stroke-width="1.5"/></svg>
<div class="b" style="left:0px;top:207px;width:1366px;height:471px;background:#e6e6e6;"></div>
<div class="b" style="left:27px;top:228px;width:1248px;height:450px;background:#fff;"></div>
<div class="b" style="left:1278px;top:227px;width:67px;height:451px;background:#a0a0a0;"></div>
<div class="b" style="left:87px;top:266px;width:105px;height:412px;background:#e7e6e6;"></div>
<div class="b" style="left:1207px;top:228px;width:68px;height:450px;background:#e6e6e6;"></div>
<div class="b" style="left:259px;top:266px;width:1px;height:412px;background:#d4d4d4;"></div>
<div class="b" style="left:429px;top:266px;width:1px;height:412px;background:#d4d4d4;"></div>
<div class="b" style="left:492px;top:266px;width:1px;height:412px;background:#d4d4d4;"></div>
<div class="b" style="left:730px;top:266px;width:1px;height:412px;background:#d4d4d4;"></div>
<div class="b" style="left:849px;top:266px;width:1px;height:412px;background:#d4d4d4;"></div>
<div class="b" style="left:968px;top:266px;width:1px;height:412px;background:#d4d4d4;"></div>
<div class="b" style="left:1087px;top:266px;width:1px;height:412px;background:#d4d4d4;"></div>
<div class="b" style="left:0px;top:226px;width:1345px;height:1px;background:#b1b1b1;"></div>
<div class="t" style="left:27px;top:208px;font-size:13px;color:#262626;width:60px;text-align:center;line-height:17px;">A</div>
<div class="b" style="left:87px;top:208px;width:1px;height:18px;background:#b1b1b1;"></div>
<div class="t" style="left:88px;top:208px;font-size:13px;color:#262626;width:103px;text-align:center;line-height:17px;">B</div>
<div class="b" style="left:191px;top:208px;width:1px;height:18px;background:#b1b1b1;"></div>
<div class="t" style="left:192px;top:208px;font-size:13px;color:#262626;width:67px;text-align:center;line-height:17px;">C</div>
<div class="b" style="left:259px;top:208px;width:1px;height:18px;background:#b1b1b1;"></div>
<div class="b" style="left:260px;top:207px;width:169px;height:20px;background:#d2d2d2;"></div>
<div class="b" style="left:260px;top:225px;width:169px;height:2px;background:#217346;"></div>
<div class="t" style="left:260px;top:208px;font-size:13px;color:#217346;width:169px;text-align:center;line-height:17px;">D</div>
<div class="b" style="left:429px;top:208px;width:1px;height:18px;background:#b1b1b1;"></div>
<div class="t" style="left:430px;top:208px;font-size:13px;color:#262626;width:62px;text-align:center;line-height:17px;">E</div>
<div class="b" style="left:492px;top:208px;width:1px;height:18px;background:#b1b1b1;"></div>
<div class="t" style="left:493px;top:208px;font-size:13px;color:#262626;width:118px;text-align:center;line-height:17px;">F</div>
<div class="b" style="left:611px;top:208px;width:1px;height:18px;background:#b1b1b1;"></div>
<div class="t" style="left:612px;top:208px;font-size:13px;color:#262626;width:118px;text-align:center;line-height:17px;">G</div>
<div class="b" style="left:730px;top:208px;width:1px;height:18px;background:#b1b1b1;"></div>
<div class="t" style="left:731px;top:208px;font-size:13px;color:#262626;width:118px;text-align:center;line-height:17px;">H</div>
<div class="b" style="left:849px;top:208px;width:1px;height:18px;background:#b1b1b1;"></div>
<div class="t" style="left:850px;top:208px;font-size:13px;color:#262626;width:118px;text-align:center;line-height:17px;">I</div>
<div class="b" style="left:968px;top:208px;width:1px;height:18px;background:#b1b1b1;"></div>
<div class="t" style="left:969px;top:208px;font-size:13px;color:#262626;width:118px;text-align:center;line-height:17px;">J</div>
<div class="b" style="left:1087px;top:208px;width:1px;height:18px;background:#b1b1b1;"></div>
<div class="t" style="left:1088px;top:208px;font-size:13px;color:#262626;width:118px;text-align:center;line-height:17px;">K</div>
<div class="b" style="left:1206px;top:208px;width:1px;height:18px;background:#b1b1b1;"></div>
<div class="t" style="left:1207px;top:208px;font-size:13px;color:#262626;width:70px;text-align:center;line-height:17px;">L</div>
<div class="b" style="left:1277px;top:208px;width:1px;height:18px;background:#b1b1b1;"></div>
<div class="t" style="left:1278px;top:208px;font-size:13px;color:#262626;width:63px;text-align:center;line-height:17px;">M</div>
<div class="b" style="left:1341px;top:208px;width:1px;height:18px;background:#b1b1b1;"></div>
<svg class="b" style="left:9px;top:210px" width="14" height="14"><path d="M13 1 V13 H1 Z" fill="#b1b1b1"/></svg>
<div class="b" style="left:25px;top:208px;width:1px;height:19px;background:#b1b1b1;"></div>
<div class="t" style="left:0px;top:229px;font-size:13px;color:#262626;width:25px;text-align:center;line-height:17px;">1</div>
<div class="b" style="left:0px;top:246px;width:26px;height:1px;background:#b1b1b1;"></div>
<div class="t" style="left:0px;top:249px;font-size:13px;color:#262626;width:25px;text-align:center;line-height:17px;">2</div>
<div class="b" style="left:0px;top:266px;width:26px;height:1px;background:#b1b1b1;"></div>
<div class="t" style="left:0px;top:269px;font-size:13px;color:#262626;width:25px;text-align:center;line-height:17px;">9</div>
<div class="b" style="left:0px;top:286px;width:26px;height:1px;background:#b1b1b1;"></div>
<div class="t" style="left:0px;top:289px;font-size:13px;color:#262626;width:25px;text-align:center;line-height:17px;">10</div>
<div class="b" style="left:0px;top:306px;width:26px;height:1px;background:#b1b1b1;"></div>
<div class="t" style="left:0px;top:309px;font-size:13px;color:#262626;width:25px;text-align:center;line-height:17px;">11</div>
<div class="b" style="left:0px;top:326px;width:26px;height:1px;background:#b1b1b1;"></div>
<div class="t" style="left:0px;top:329px;font-size:13px;color:#262626;width:25px;text-align:center;line-height:17px;">12</div>
<div class="b" style="left:0px;top:346px;width:26px;height:1px;background:#b1b1b1;"></div>
<div class="t" style="left:0px;top:349px;font-size:13px;color:#262626;width:25px;text-align:center;line-height:17px;">13</div>
<div class="b" style="left:0px;top:366px;width:26px;height:1px;background:#b1b1b1;"></div>
<div class="t" style="left:0px;top:369px;font-size:13px;color:#262626;width:25px;text-align:center;line-height:17px;">14</div>
<div class="b" style="left:0px;top:386px;width:26px;height:1px;background:#b1b1b1;"></div>
<div class="t" style="left:0px;top:389px;font-size:13px;color:#262626;width:25px;text-align:center;line-height:17px;">15</div>
<div class="b" style="left:0px;top:406px;width:26px;height:1px;background:#b1b1b1;"></div>
<div class="t" style="left:0px;top:409px;font-size:13px;color:#262626;width:25px;text-align:center;line-height:17px;">16</div>
<div class="b" style="left:0px;top:426px;width:26px;height:1px;background:#b1b1b1;"></div>
<div class="t" style="left:0px;top:429px;font-size:13px;color:#262626;width:25px;text-align:center;line-height:17px;">17</div>
<div class="b" style="left:0px;top:446px;width:26px;height:1px;background:#b1b1b1;"></div>
<div class="t" style="left:0px;top:449px;font-size:13px;color:#262626;width:25px;text-align:center;line-height:17px;">18</div>
<div class="b" style="left:0px;top:466px;width:26px;height:1px;background:#b1b1b1;"></div>
<div class="t" style="left:0px;top:469px;font-size:13px;color:#262626;width:25px;text-align:center;line-height:17px;">19</div>
<div class="b" style="left:0px;top:486px;width:26px;height:1px;background:#b1b1b1;"></div>
<div class="b" style="left:0px;top:487px;width:26px;height:19px;background:#d2d2d2;"></div>
<div class="b" style="left:24px;top:487px;width:2px;height:19px;background:#217346;"></div>
<div class="t" style="left:0px;top:489px;font-size:13px;color:#217346;width:25px;text-align:center;line-height:17px;">20</div>
<div class="b" style="left:0px;top:506px;width:26px;height:1px;background:#b1b1b1;"></div>
<div class="t" style="left:0px;top:509px;font-size:13px;color:#262626;width:25px;text-align:center;line-height:17px;">21</div>
<div class="b" style="left:0px;top:526px;width:26px;height:1px;background:#b1b1b1;"></div>
<div class="t" style="left:0px;top:529px;font-size:13px;color:#262626;width:25px;text-align:center;line-height:17px;">22</div>
<div class="b" style="left:0px;top:546px;width:26px;height:1px;background:#b1b1b1;"></div>
<div class="t" style="left:0px;top:549px;font-size:13px;color:#262626;width:25px;text-align:center;line-height:17px;">23</div>
<div class="b" style="left:0px;top:566px;width:26px;height:1px;background:#b1b1b1;"></div>
<div class="t" style="left:0px;top:569px;font-size:13px;color:#262626;width:25px;text-align:center;line-height:17px;">24</div>
<div class="b" style="left:0px;top:586px;width:26px;height:1px;background:#b1b1b1;"></div>
<div class="t" style="left:0px;top:589px;font-size:13px;color:#262626;width:25px;text-align:center;line-height:17px;">25</div>
<div class="b" style="left:0px;top:606px;width:26px;height:1px;background:#b1b1b1;"></div>
<div class="t" style="left:0px;top:609px;font-size:13px;color:#262626;width:25px;text-align:center;line-height:17px;">26</div>
<div class="b" style="left:0px;top:626px;width:26px;height:1px;background:#b1b1b1;"></div>
<div class="t" style="left:0px;top:629px;font-size:13px;color:#262626;width:25px;text-align:center;line-height:17px;">27</div>
<div class="b" style="left:0px;top:646px;width:26px;height:1px;background:#b1b1b1;"></div>
<div class="t" style="left:0px;top:649px;font-size:13px;color:#262626;width:25px;text-align:center;line-height:17px;">28</div>
<div class="b" style="left:0px;top:666px;width:26px;height:1px;background:#b1b1b1;"></div>
<div class="t" style="left:0px;top:669px;font-size:13px;color:#262626;width:25px;text-align:center;line-height:17px;">29</div>
<div class="b" style="left:0px;top:686px;width:26px;height:1px;background:#b1b1b1;"></div>
<div class="b" style="left:25px;top:227px;width:1px;height:451px;background:#b1b1b1;"></div>
<div class="t" style="left:550.59px;top:229px;font-size:13px;color:#000;font-weight:700;letter-spacing:0.009px;line-height:17px;">Influencers Database</div>
<div class="b" style="left:27px;top:246px;width:1180px;height:1px;background:#000;"></div>
<div class="b" style="left:27px;top:247px;width:1179px;height:19px;background:#ff0000;"></div>
<div class="b" style="left:87px;top:246px;width:1px;height:20px;background:#000;"></div>
<div class="t" style="left:27px;top:250px;width:43px;height:16px;overflow:hidden;font-size:13px;font-weight:700;color:#fff;letter-spacing:0px"><div style="width:60px;text-align:center;margin-left:-1.00px">SN</div></div>
<div class="b" style="left:70px;top:248px;width:17px;height:17px;background:linear-gradient(#fdfdfd,#e9ecef);border:1px solid #b8b8b8;border-color:#c8c8c8 #a8a8a8 #a0a0a0 #c8c8c8"></div><svg class="b" style="left:70px;top:248px;" width="17" height="17" viewBox="0 0 17 17"><path d="M4.2 6.8 H12.2 L8.2 11.2 Z" fill="#5a5a5a"/></svg>
<div class="b" style="left:191px;top:246px;width:1px;height:20px;background:#000;"></div>
<div class="t" style="left:88px;top:250px;width:86px;height:16px;overflow:hidden;font-size:13px;font-weight:700;color:#fff;letter-spacing:0.33px"><div style="width:103px;text-align:center;margin-left:-0.83px">IG (hidden)</div></div>
<div class="b" style="left:174px;top:248px;width:17px;height:17px;background:linear-gradient(#fdfdfd,#e9ecef);border:1px solid #b8b8b8;border-color:#c8c8c8 #a8a8a8 #a0a0a0 #c8c8c8"></div><svg class="b" style="left:174px;top:248px;" width="17" height="17" viewBox="0 0 17 17"><path d="M4.2 6.8 H12.2 L8.2 11.2 Z" fill="#5a5a5a"/></svg>
<div class="b" style="left:259px;top:246px;width:1px;height:20px;background:#000;"></div>
<div class="t" style="left:192px;top:250px;width:50px;height:16px;overflow:hidden;font-size:13px;font-weight:700;color:#fff;letter-spacing:0.2px"><div style="width:67px;text-align:center;margin-left:-0.90px">Country</div></div>
<div class="b" style="left:242px;top:248px;width:17px;height:17px;background:linear-gradient(#fdfdfd,#e9ecef);border:1px solid #b8b8b8;border-color:#c8c8c8 #a8a8a8 #a0a0a0 #c8c8c8"></div><svg class="b" style="left:242px;top:248px;" width="17" height="17" viewBox="0 0 17 17"><path d="M4.2 6.8 H12.2 L8.2 11.2 Z" fill="#5a5a5a"/></svg>
<div class="b" style="left:429px;top:246px;width:1px;height:20px;background:#000;"></div>
<div class="t" style="left:260px;top:250px;width:152px;height:16px;overflow:hidden;font-size:13px;font-weight:700;color:#fff;letter-spacing:0.6px"><div style="width:169px;text-align:center;margin-left:-0.70px">Niche</div></div>
<div class="b" style="left:412px;top:248px;width:17px;height:17px;background:linear-gradient(#fdfdfd,#e9ecef);border:1px solid #b8b8b8;border-color:#c8c8c8 #a8a8a8 #a0a0a0 #c8c8c8"></div><svg class="b" style="left:412px;top:248px;" width="17" height="17" viewBox="0 0 17 17"><path d="M3.8 10 H9.4 L6.6 13 Z" fill="#5a5a5a"/><path d="M11.6 4 V11.6 M9.6 9.8 L11.6 12 L13.6 9.8" fill="none" stroke="#4d4d4d" stroke-width="1.1"/></svg>
<div class="b" style="left:492px;top:246px;width:1px;height:20px;background:#000;"></div>
<div class="t" style="left:430px;top:250px;width:45px;height:16px;overflow:hidden;font-size:13px;font-weight:700;color:#fff;letter-spacing:0.1px"><div style="width:62px;text-align:center;margin-left:-0.95px">Gender</div></div>
<div class="b" style="left:475px;top:248px;width:17px;height:17px;background:linear-gradient(#fdfdfd,#e9ecef);border:1px solid #b8b8b8;border-color:#c8c8c8 #a8a8a8 #a0a0a0 #c8c8c8"></div><svg class="b" style="left:475px;top:248px;" width="17" height="17" viewBox="0 0 17 17"><path d="M4.2 6.8 H12.2 L8.2 11.2 Z" fill="#5a5a5a"/></svg>
<div class="b" style="left:611px;top:246px;width:1px;height:20px;background:#000;"></div>
<div class="t" style="left:493px;top:250px;width:101px;height:16px;overflow:hidden;font-size:13px;font-weight:700;color:#fff;letter-spacing:0.27px"><div style="width:118px;text-align:center;margin-left:-0.86px">Followers</div></div>
<div class="b" style="left:594px;top:248px;width:17px;height:17px;background:linear-gradient(#fdfdfd,#e9ecef);border:1px solid #b8b8b8;border-color:#c8c8c8 #a8a8a8 #a0a0a0 #c8c8c8"></div><svg class="b" style="left:594px;top:248px;" width="17" height="17" viewBox="0 0 17 17"><path d="M4.2 6.8 H12.2 L8.2 11.2 Z" fill="#5a5a5a"/></svg>
<div class="b" style="left:730px;top:246px;width:1px;height:20px;background:#000;"></div>
<div class="t" style="left:612px;top:250px;width:101px;height:16px;overflow:hidden;font-size:13px;font-weight:700;color:#fff;letter-spacing:-0.45px"><div style="width:118px;text-align:center;margin-left:-1.23px">ER %</div></div>
<div class="b" style="left:713px;top:248px;width:17px;height:17px;background:linear-gradient(#fdfdfd,#e9ecef);border:1px solid #b8b8b8;border-color:#c8c8c8 #a8a8a8 #a0a0a0 #c8c8c8"></div><svg class="b" style="left:713px;top:248px;" width="17" height="17" viewBox="0 0 17 17"><path d="M4.2 6.8 H12.2 L8.2 11.2 Z" fill="#5a5a5a"/></svg>
<div class="b" style="left:849px;top:246px;width:1px;height:20px;background:#000;"></div>
<div class="t" style="left:731px;top:250px;width:101px;height:16px;overflow:hidden;font-size:13px;font-weight:700;color:#fff;letter-spacing:-0.28px"><div style="width:118px;text-align:center;margin-left:-1.14px">Average Likes</div></div>
<div class="b" style="left:832px;top:248px;width:17px;height:17px;background:linear-gradient(#fdfdfd,#e9ecef);border:1px solid #b8b8b8;border-color:#c8c8c8 #a8a8a8 #a0a0a0 #c8c8c8"></div><svg class="b" style="left:832px;top:248px;" width="17" height="17" viewBox="0 0 17 17"><path d="M4.2 6.8 H12.2 L8.2 11.2 Z" fill="#5a5a5a"/></svg>
<div class="b" style="left:968px;top:246px;width:1px;height:20px;background:#000;"></div>
<div class="t" style="left:850px;top:250px;width:101px;height:16px;overflow:hidden;font-size:13px;font-weight:700;color:#fff;letter-spacing:-0.4px"><div style="width:118px;text-align:center;margin-left:-1.20px">Avg Comments</div></div>
<div class="b" style="left:951px;top:248px;width:17px;height:17px;background:linear-gradient(#fdfdfd,#e9ecef);border:1px solid #b8b8b8;border-color:#c8c8c8 #a8a8a8 #a0a0a0 #c8c8c8"></div><svg class="b" style="left:951px;top:248px;" width="17" height="17" viewBox="0 0 17 17"><path d="M4.2 6.8 H12.2 L8.2 11.2 Z" fill="#5a5a5a"/></svg>
<div class="b" style="left:1087px;top:246px;width:1px;height:20px;background:#000;"></div>
<div class="t" style="left:969px;top:250px;width:101px;height:16px;overflow:hidden;font-size:13px;font-weight:700;color:#fff;letter-spacing:-0.2px"><div style="width:118px;text-align:center;margin-left:-1.10px">Posts Per week</div></div>
<div class="b" style="left:1070px;top:248px;width:17px;height:17px;background:linear-gradient(#fdfdfd,#e9ecef);border:1px solid #b8b8b8;border-color:#c8c8c8 #a8a8a8 #a0a0a0 #c8c8c8"></div><svg class="b" style="left:1070px;top:248px;" width="17" height="17" viewBox="0 0 17 17"><path d="M4.2 6.8 H12.2 L8.2 11.2 Z" fill="#5a5a5a"/></svg>
<div class="b" style="left:1206px;top:246px;width:1px;height:20px;background:#000;"></div>
<div class="t" style="left:1088px;top:250px;width:101px;height:16px;overflow:hidden;font-size:13px;font-weight:700;color:#fff;letter-spacing:0.27px"><div style="width:118px;text-align:center;margin-left:-0.86px">Contacted</div></div>
<div class="b" style="left:1189px;top:248px;width:17px;height:17px;background:linear-gradient(#fdfdfd,#e9ecef);border:1px solid #b8b8b8;border-color:#c8c8c8 #a8a8a8 #a0a0a0 #c8c8c8"></div><svg class="b" style="left:1189px;top:248px;" width="17" height="17" viewBox="0 0 17 17"><path d="M4.2 6.8 H12.2 L8.2 11.2 Z" fill="#5a5a5a"/></svg>
<div class="b" style="left:1207px;top:246px;width:68px;height:1px;background:#4472c4;"></div>
<div class="b" style="left:1207px;top:247px;width:68px;height:19.5px;background:#ff0000;"></div>
<div class="t" style="left:1207px;top:250px;width:53px;height:16px;overflow:hidden;font-size:13px;font-weight:700;color:#fff;letter-spacing:0.4px"><div style="width:70px;text-align:center;margin-left:-0.80px">Email</div></div>
<div class="b" style="left:1259px;top:248px;width:17px;height:17px;background:linear-gradient(#fdfdfd,#e9ecef);border:1px solid #b8b8b8;border-color:#c8c8c8 #a8a8a8 #a0a0a0 #c8c8c8"></div><svg class="b" style="left:1259px;top:248px;" width="17" height="17" viewBox="0 0 17 17"><path d="M4.2 6.8 H12.2 L8.2 11.2 Z" fill="#5a5a5a"/></svg>
<div class="b" style="left:1088px;top:266px;width:117px;height:20px;background:#c6efce;"></div>
<div class="b" style="left:494px;top:268px;width:40.9px;height:16px;background:linear-gradient(90deg,#63be7b,#e6f5ea);border:1px solid #63be7b"></div>
<div class="b" style="left:613px;top:268px;width:109.5px;height:16px;background:linear-gradient(90deg,#63be7b,#e6f5ea);border:1px solid #63be7b"></div>
<div class="b" style="left:732px;top:268px;width:45.9px;height:16px;background:linear-gradient(90deg,#ff555a,#ffe6e7);border:1px solid #ff555a"></div>
<div class="b" style="left:851px;top:268px;width:115.0px;height:16px;background:linear-gradient(90deg,#ffb628,#fff3dc);border:1px solid #ffb628"></div>
<div class="b" style="left:970px;top:268px;width:4.7px;height:16px;background:linear-gradient(90deg,#d6007b,#fbe0ef);border:1px solid #d6007b"></div>
<div class="b" style="left:494px;top:288px;width:99.6px;height:16px;background:linear-gradient(90deg,#63be7b,#e6f5ea);border:1px solid #63be7b"></div>
<div class="b" style="left:613px;top:288px;width:7.5px;height:16px;background:linear-gradient(90deg,#63be7b,#e6f5ea);border:1px solid #63be7b"></div>
<div class="b" style="left:732px;top:288px;width:8.6px;height:16px;background:linear-gradient(90deg,#ff555a,#ffe6e7);border:1px solid #ff555a"></div>
<div class="b" style="left:851px;top:288px;width:1.6px;height:16px;background:linear-gradient(90deg,#ffb628,#fff3dc);border:1px solid #ffb628"></div>
<div class="b" style="left:970px;top:288px;width:86.2px;height:16px;background:linear-gradient(90deg,#d6007b,#fbe0ef);border:1px solid #d6007b"></div>
<div class="b" style="left:1088px;top:307px;width:117px;height:19px;background:#c6efce;"></div>
<div class="b" style="left:494px;top:308px;width:108.6px;height:16px;background:linear-gradient(90deg,#63be7b,#e6f5ea);border:1px solid #63be7b"></div>
<div class="b" style="left:613px;top:308px;width:3.4px;height:16px;background:linear-gradient(90deg,#63be7b,#e6f5ea);border:1px solid #63be7b"></div>
<div class="b" style="left:732px;top:308px;width:4.2px;height:16px;background:linear-gradient(90deg,#ff555a,#ffe6e7);border:1px solid #ff555a"></div>
<div class="b" style="left:851px;top:308px;width:13.4px;height:16px;background:linear-gradient(90deg,#ffb628,#fff3dc);border:1px solid #ffb628"></div>
<div class="b" style="left:970px;top:308px;width:11.1px;height:16px;background:linear-gradient(90deg,#d6007b,#fbe0ef);border:1px solid #d6007b"></div>
<div class="b" style="left:1088px;top:327px;width:117px;height:19px;background:#c6efce;"></div>
<div class="b" style="left:494px;top:328px;width:114.3px;height:16px;background:linear-gradient(90deg,#63be7b,#e6f5ea);border:1px solid #63be7b"></div>
<div class="b" style="left:613px;top:328px;width:15.9px;height:16px;background:linear-gradient(90deg,#63be7b,#e6f5ea);border:1px solid #63be7b"></div>
<div class="b" style="left:732px;top:328px;width:27.4px;height:16px;background:linear-gradient(90deg,#ff555a,#ffe6e7);border:1px solid #ff555a"></div>
<div class="b" style="left:851px;top:328px;width:6.8px;height:16px;background:linear-gradient(90deg,#ffb628,#fff3dc);border:1px solid #ffb628"></div>
<div class="b" style="left:970px;top:328px;width:28.8px;height:16px;background:linear-gradient(90deg,#d6007b,#fbe0ef);border:1px solid #d6007b"></div>
<div class="b" style="left:1088px;top:347px;width:117px;height:19px;background:#c6efce;"></div>
<div class="b" style="left:494px;top:348px;width:112.2px;height:16px;background:linear-gradient(90deg,#63be7b,#e6f5ea);border:1px solid #63be7b"></div>
<div class="b" style="left:613px;top:348px;width:4.3px;height:16px;background:linear-gradient(90deg,#63be7b,#e6f5ea);border:1px solid #63be7b"></div>
<div class="b" style="left:732px;top:348px;width:5.1px;height:16px;background:linear-gradient(90deg,#ff555a,#ffe6e7);border:1px solid #ff555a"></div>
<div class="b" style="left:851px;top:348px;width:2.2px;height:16px;background:linear-gradient(90deg,#ffb628,#fff3dc);border:1px solid #ffb628"></div>
<div class="b" style="left:970px;top:348px;width:20.3px;height:16px;background:linear-gradient(90deg,#d6007b,#fbe0ef);border:1px solid #d6007b"></div>
<div class="b" style="left:494px;top:368px;width:107.6px;height:16px;background:linear-gradient(90deg,#63be7b,#e6f5ea);border:1px solid #63be7b"></div>
<div class="b" style="left:613px;top:368px;width:7.7px;height:16px;background:linear-gradient(90deg,#63be7b,#e6f5ea);border:1px solid #63be7b"></div>
<div class="b" style="left:732px;top:368px;width:10.9px;height:16px;background:linear-gradient(90deg,#ff555a,#ffe6e7);border:1px solid #ff555a"></div>
<div class="b" style="left:851px;top:368px;width:1.6px;height:16px;background:linear-gradient(90deg,#ffb628,#fff3dc);border:1px solid #ffb628"></div>
<div class="b" style="left:970px;top:368px;width:57.5px;height:16px;background:linear-gradient(90deg,#d6007b,#fbe0ef);border:1px solid #d6007b"></div>
<div class="b" style="left:494px;top:388px;width:112.1px;height:16px;background:linear-gradient(90deg,#63be7b,#e6f5ea);border:1px solid #63be7b"></div>
<div class="b" style="left:613px;top:388px;width:17.6px;height:16px;background:linear-gradient(90deg,#63be7b,#e6f5ea);border:1px solid #63be7b"></div>
<div class="b" style="left:732px;top:388px;width:24.7px;height:16px;background:linear-gradient(90deg,#ff555a,#ffe6e7);border:1px solid #ff555a"></div>
<div class="b" style="left:851px;top:388px;width:14.9px;height:16px;background:linear-gradient(90deg,#ffb628,#fff3dc);border:1px solid #ffb628"></div>
<div class="b" style="left:970px;top:388px;width:24.6px;height:16px;background:linear-gradient(90deg,#d6007b,#fbe0ef);border:1px solid #d6007b"></div>
<div class="b" style="left:1088px;top:407px;width:117px;height:19px;background:#c6efce;"></div>
<div class="b" style="left:494px;top:408px;width:108.7px;height:16px;background:linear-gradient(90deg,#63be7b,#e6f5ea);border:1px solid #63be7b"></div>
<div class="b" style="left:613px;top:408px;width:43.1px;height:16px;background:linear-gradient(90deg,#63be7b,#e6f5ea);border:1px solid #63be7b"></div>
<div class="b" style="left:732px;top:408px;width:53.3px;height:16px;background:linear-gradient(90deg,#ff555a,#ffe6e7);border:1px solid #ff555a"></div>
<div class="b" style="left:851px;top:408px;width:32.6px;height:16px;background:linear-gradient(90deg,#ffb628,#fff3dc);border:1px solid #ffb628"></div>
<div class="b" style="left:970px;top:408px;width:1.8px;height:16px;background:linear-gradient(90deg,#d6007b,#fbe0ef);border:1px solid #d6007b"></div>
<div class="b" style="left:1088px;top:427px;width:117px;height:19px;background:#c6efce;"></div>
<div class="b" style="left:494px;top:428px;width:112.8px;height:16px;background:linear-gradient(90deg,#63be7b,#e6f5ea);border:1px solid #63be7b"></div>
<div class="b" style="left:613px;top:428px;width:4.2px;height:16px;background:linear-gradient(90deg,#63be7b,#e6f5ea);border:1px solid #63be7b"></div>
<div class="b" style="left:732px;top:428px;width:4.5px;height:16px;background:linear-gradient(90deg,#ff555a,#ffe6e7);border:1px solid #ff555a"></div>
<div class="b" style="left:851px;top:428px;width:27.7px;height:16px;background:linear-gradient(90deg,#ffb628,#fff3dc);border:1px solid #ffb628"></div>
<div class="b" style="left:970px;top:428px;width:43.1px;height:16px;background:linear-gradient(90deg,#d6007b,#fbe0ef);border:1px solid #d6007b"></div>
<div class="b" style="left:1088px;top:447px;width:117px;height:19px;background:#c6efce;"></div>
<div class="b" style="left:494px;top:448px;width:61.0px;height:16px;background:linear-gradient(90deg,#63be7b,#e6f5ea);border:1px solid #63be7b"></div>
<div class="b" style="left:613px;top:448px;width:3.6px;height:16px;background:linear-gradient(90deg,#63be7b,#e6f5ea);border:1px solid #63be7b"></div>
<div class="b" style="left:732px;top:448px;width:1.9px;height:16px;background:linear-gradient(90deg,#ff555a,#ffe6e7);border:1px solid #ff555a"></div>
<div class="b" style="left:851px;top:448px;width:6.2px;height:16px;background:linear-gradient(90deg,#ffb628,#fff3dc);border:1px solid #ffb628"></div>
<div class="b" style="left:970px;top:448px;width:26.5px;height:16px;background:linear-gradient(90deg,#d6007b,#fbe0ef);border:1px solid #d6007b"></div>
<div class="b" style="left:494px;top:468px;width:108.3px;height:16px;background:linear-gradient(90deg,#63be7b,#e6f5ea);border:1px solid #63be7b"></div>
<div class="b" style="left:613px;top:468px;width:14.5px;height:16px;background:linear-gradient(90deg,#63be7b,#e6f5ea);border:1px solid #63be7b"></div>
<div class="b" style="left:732px;top:468px;width:17.3px;height:16px;background:linear-gradient(90deg,#ff555a,#ffe6e7);border:1px solid #ff555a"></div>
<div class="b" style="left:851px;top:468px;width:28.6px;height:16px;background:linear-gradient(90deg,#ffb628,#fff3dc);border:1px solid #ffb628"></div>
<div class="b" style="left:970px;top:468px;width:15.0px;height:16px;background:linear-gradient(90deg,#d6007b,#fbe0ef);border:1px solid #d6007b"></div>
<div class="b" style="left:494px;top:488px;width:24.9px;height:16px;background:linear-gradient(90deg,#63be7b,#e6f5ea);border:1px solid #63be7b"></div>
<div class="b" style="left:613px;top:488px;width:17.7px;height:16px;background:linear-gradient(90deg,#63be7b,#e6f5ea);border:1px solid #63be7b"></div>
<div class="b" style="left:732px;top:488px;width:5.0px;height:16px;background:linear-gradient(90deg,#ff555a,#ffe6e7);border:1px solid #ff555a"></div>
<div class="b" style="left:851px;top:488px;width:5.9px;height:16px;background:linear-gradient(90deg,#ffb628,#fff3dc);border:1px solid #ffb628"></div>
<div class="b" style="left:970px;top:488px;width:11.1px;height:16px;background:linear-gradient(90deg,#d6007b,#fbe0ef);border:1px solid #d6007b"></div>
<div class="b" style="left:494px;top:508px;width:34.3px;height:16px;background:linear-gradient(90deg,#63be7b,#e6f5ea);border:1px solid #63be7b"></div>
<div class="b" style="left:613px;top:508px;width:108.0px;height:16px;background:linear-gradient(90deg,#63be7b,#e6f5ea);border:1px solid #63be7b"></div>
<div class="b" style="left:732px;top:508px;width:98.7px;height:16px;background:linear-gradient(90deg,#ff555a,#ffe6e7);border:1px solid #ff555a"></div>
<div class="b" style="left:851px;top:508px;width:61.9px;height:16px;background:linear-gradient(90deg,#ffb628,#fff3dc);border:1px solid #ffb628"></div>
<div class="b" style="left:970px;top:508px;width:2.3px;height:16px;background:linear-gradient(90deg,#d6007b,#fbe0ef);border:1px solid #d6007b"></div>
<div class="b" style="left:1088px;top:527px;width:117px;height:19px;background:#c6efce;"></div>
<div class="b" style="left:494px;top:528px;width:115.0px;height:16px;background:linear-gradient(90deg,#63be7b,#e6f5ea);border:1px solid #63be7b"></div>
<div class="b" style="left:613px;top:528px;width:13.5px;height:16px;background:linear-gradient(90deg,#63be7b,#e6f5ea);border:1px solid #63be7b"></div>
<div class="b" style="left:732px;top:528px;width:24.3px;height:16px;background:linear-gradient(90deg,#ff555a,#ffe6e7);border:1px solid #ff555a"></div>
<div class="b" style="left:851px;top:528px;width:14.6px;height:16px;background:linear-gradient(90deg,#ffb628,#fff3dc);border:1px solid #ffb628"></div>
<div class="b" style="left:970px;top:528px;width:7.7px;height:16px;background:linear-gradient(90deg,#d6007b,#fbe0ef);border:1px solid #d6007b"></div>
<div class="b" style="left:494px;top:548px;width:115.0px;height:16px;background:linear-gradient(90deg,#63be7b,#e6f5ea);border:1px solid #63be7b"></div>
<div class="b" style="left:613px;top:548px;width:3.8px;height:16px;background:linear-gradient(90deg,#63be7b,#e6f5ea);border:1px solid #63be7b"></div>
<div class="b" style="left:732px;top:548px;width:5.1px;height:16px;background:linear-gradient(90deg,#ff555a,#ffe6e7);border:1px solid #ff555a"></div>
<div class="b" style="left:851px;top:548px;width:16.8px;height:16px;background:linear-gradient(90deg,#ffb628,#fff3dc);border:1px solid #ffb628"></div>
<div class="b" style="left:970px;top:548px;width:10.5px;height:16px;background:linear-gradient(90deg,#d6007b,#fbe0ef);border:1px solid #d6007b"></div>
<div class="b" style="left:494px;top:568px;width:24.1px;height:16px;background:linear-gradient(90deg,#63be7b,#e6f5ea);border:1px solid #63be7b"></div>
<div class="b" style="left:613px;top:568px;width:10.5px;height:16px;background:linear-gradient(90deg,#63be7b,#e6f5ea);border:1px solid #63be7b"></div>
<div class="b" style="left:732px;top:568px;width:2.6px;height:16px;background:linear-gradient(90deg,#ff555a,#ffe6e7);border:1px solid #ff555a"></div>
<div class="b" style="left:851px;top:568px;width:7.5px;height:16px;background:linear-gradient(90deg,#ffb628,#fff3dc);border:1px solid #ffb628"></div>
<div class="b" style="left:970px;top:568px;width:1.6px;height:16px;background:linear-gradient(90deg,#d6007b,#fbe0ef);border:1px solid #d6007b"></div>
<div class="b" style="left:494px;top:588px;width:25.1px;height:16px;background:linear-gradient(90deg,#63be7b,#e6f5ea);border:1px solid #63be7b"></div>
<div class="b" style="left:613px;top:588px;width:3.1px;height:16px;background:linear-gradient(90deg,#63be7b,#e6f5ea);border:1px solid #63be7b"></div>
<div class="b" style="left:732px;top:588px;width:1.6px;height:16px;background:linear-gradient(90deg,#ff555a,#ffe6e7);border:1px solid #ff555a"></div>
<div class="b" style="left:851px;top:588px;width:1.6px;height:16px;background:linear-gradient(90deg,#ffb628,#fff3dc);border:1px solid #ffb628"></div>
<div class="b" style="left:970px;top:588px;width:13.8px;height:16px;background:linear-gradient(90deg,#d6007b,#fbe0ef);border:1px solid #d6007b"></div>
<div class="b" style="left:1088px;top:607px;width:117px;height:19px;background:#c6efce;"></div>
<div class="b" style="left:494px;top:608px;width:50.4px;height:16px;background:linear-gradient(90deg,#63be7b,#e6f5ea);border:1px solid #63be7b"></div>
<div class="b" style="left:613px;top:608px;width:6.7px;height:16px;background:linear-gradient(90deg,#63be7b,#e6f5ea);border:1px solid #63be7b"></div>
<div class="b" style="left:732px;top:608px;width:3.9px;height:16px;background:linear-gradient(90deg,#ff555a,#ffe6e7);border:1px solid #ff555a"></div>
<div class="b" style="left:851px;top:608px;width:8.4px;height:16px;background:linear-gradient(90deg,#ffb628,#fff3dc);border:1px solid #ffb628"></div>
<div class="b" style="left:970px;top:608px;width:21.6px;height:16px;background:linear-gradient(90deg,#d6007b,#fbe0ef);border:1px solid #d6007b"></div>
<div class="b" style="left:494px;top:628px;width:24.9px;height:16px;background:linear-gradient(90deg,#63be7b,#e6f5ea);border:1px solid #63be7b"></div>
<div class="b" style="left:613px;top:628px;width:10.7px;height:16px;background:linear-gradient(90deg,#63be7b,#e6f5ea);border:1px solid #63be7b"></div>
<div class="b" style="left:732px;top:628px;width:3.3px;height:16px;background:linear-gradient(90deg,#ff555a,#ffe6e7);border:1px solid #ff555a"></div>
<div class="b" style="left:851px;top:628px;width:5.6px;height:16px;background:linear-gradient(90deg,#ffb628,#fff3dc);border:1px solid #ffb628"></div>
<div class="b" style="left:970px;top:628px;width:5.0px;height:16px;background:linear-gradient(90deg,#d6007b,#fbe0ef);border:1px solid #d6007b"></div>
<div class="b" style="left:1088px;top:647px;width:117px;height:19px;background:#c6efce;"></div>
<div class="b" style="left:494px;top:648px;width:69.8px;height:16px;background:linear-gradient(90deg,#63be7b,#e6f5ea);border:1px solid #63be7b"></div>
<div class="b" style="left:613px;top:648px;width:4.0px;height:16px;background:linear-gradient(90deg,#63be7b,#e6f5ea);border:1px solid #63be7b"></div>
<div class="b" style="left:732px;top:648px;width:3.0px;height:16px;background:linear-gradient(90deg,#ff555a,#ffe6e7);border:1px solid #ff555a"></div>
<div class="b" style="left:851px;top:648px;width:3.7px;height:16px;background:linear-gradient(90deg,#ffb628,#fff3dc);border:1px solid #ffb628"></div>
<div class="b" style="left:970px;top:648px;width:15.7px;height:16px;background:linear-gradient(90deg,#d6007b,#fbe0ef);border:1px solid #d6007b"></div>
<div class="b" style="left:494px;top:668px;width:108.3px;height:16px;background:linear-gradient(90deg,#63be7b,#e6f5ea);border:1px solid #63be7b"></div>
<div class="b" style="left:613px;top:668px;width:6.4px;height:16px;background:linear-gradient(90deg,#63be7b,#e6f5ea);border:1px solid #63be7b"></div>
<div class="b" style="left:732px;top:668px;width:7.4px;height:16px;background:linear-gradient(90deg,#ff555a,#ffe6e7);border:1px solid #ff555a"></div>
<div class="b" style="left:851px;top:668px;width:20.8px;height:16px;background:linear-gradient(90deg,#ffb628,#fff3dc);border:1px solid #ffb628"></div>
<div class="b" style="left:970px;top:668px;width:34.5px;height:16px;background:linear-gradient(90deg,#d6007b,#fbe0ef);border:1px solid #d6007b"></div>
<div class="t" style="left:216.2px;top:385px;font-size:65px;color:rgba(104,104,104,0.8);line-height:75px;">Page&nbsp;</div>
<svg class="b" style="left:0;top:0" width="1366" height="768"><path transform="translate(386.05,445) scale(0.031738,-0.031738)" d="M763 0 H583 V1147 Q518 1085 412.5 1023 Q307 961 223 930 V1104 Q374 1175 487 1276 Q600 1377 647 1472 H763 Z" fill="rgba(104,104,104,0.8)"/></svg>
<div class="t" style="left:806.2px;top:385px;font-size:65px;color:rgba(104,104,104,0.8);line-height:75px;">Page 2</div>
<div class="t" style="left:1212px;top:417px;font-size:7px;color:#8a8a8a;width:60px;text-align:center;line-height:17px;">Page 3</div>
<div class="t" style="left:30.5px;top:269px;font-size:12.8px;color:#000;letter-spacing:0.047px;line-height:17px;">#VALUE!</div>
<svg class="b" style="left:27px;top:266px" width="6" height="6"><path d="M0 0 H6 L0 6 Z" fill="#107c41"/></svg>
<div class="t" style="left:194.6px;top:269px;font-size:13px;color:#000;letter-spacing:-1.2px;transform:scaleX(0.89);transform-origin:0 0;line-height:17px;">US</div>
<div class="t" style="left:261.56px;top:269px;font-size:13.5px;color:#000;letter-spacing:0.192px;line-height:17px;">Home / Family / Sports</div>
<div class="t" style="left:431.95px;top:269px;font-size:13.5px;color:#000;letter-spacing:0.866px;line-height:17px;">M</div>
<div class="t" style="left:492px;top:269px;font-size:12.8px;color:#000;width:112px;text-align:right;line-height:17px;">35,500</div>
<div class="t" style="left:611px;top:269px;font-size:12.8px;color:#000;width:117.5px;text-align:right;line-height:17px;">43.20%</div>
<div class="t" style="left:730px;top:269px;font-size:12.8px;color:#000;width:113px;text-align:right;line-height:17px;">14,088</div>
<div class="t" style="left:849px;top:269px;font-size:12.8px;color:#000;width:118px;text-align:right;line-height:17px;">370</div>
<div class="t" style="left:968px;top:269px;font-size:12.8px;color:#000;width:118px;text-align:right;line-height:17px;">1.14</div>
<div class="t" style="left:1089.58px;top:269px;font-size:13.2px;color:#006100;font-weight:700;letter-spacing:-0.015px;line-height:17px;">yes</div>
<div class="b" style="left:27px;top:286px;width:1248px;height:1px;background:#4472c4;"></div>
<div class="t" style="left:30.5px;top:289px;font-size:12.8px;color:#000;letter-spacing:0.047px;line-height:17px;">#VALUE!</div>
<svg class="b" style="left:27px;top:287px" width="6" height="6"><path d="M0 0 H6 L0 6 Z" fill="#107c41"/></svg>
<div class="t" style="left:194.6px;top:289px;font-size:13px;color:#000;letter-spacing:-1.2px;transform:scaleX(0.89);transform-origin:0 0;line-height:17px;">US</div>
<div class="t" style="left:261.56px;top:289px;font-size:13.5px;color:#000;letter-spacing:0.011px;line-height:17px;">Food and Cooking</div>
<div class="t" style="left:431.95px;top:289px;font-size:13.5px;color:#000;letter-spacing:0.869px;line-height:17px;">N/A</div>
<div class="t" style="left:492px;top:289px;font-size:12.8px;color:#000;width:112px;text-align:right;line-height:17px;">86,500</div>
<div class="t" style="left:611px;top:289px;font-size:12.8px;color:#000;width:117.5px;text-align:right;line-height:17px;">2.94%</div>
<div class="t" style="left:730px;top:289px;font-size:12.8px;color:#000;width:113px;text-align:right;line-height:17px;">2,633</div>
<div class="t" style="left:849px;top:289px;font-size:12.8px;color:#000;width:118px;text-align:right;line-height:17px;">4</div>
<div class="t" style="left:968px;top:289px;font-size:12.8px;color:#000;width:118px;text-align:right;line-height:17px;">21</div>
<div class="b" style="left:27px;top:306px;width:1248px;height:1px;background:#4472c4;"></div>
<div class="t" style="left:30.5px;top:309px;font-size:12.8px;color:#000;letter-spacing:0.047px;line-height:17px;">#VALUE!</div>
<svg class="b" style="left:27px;top:307px" width="6" height="6"><path d="M0 0 H6 L0 6 Z" fill="#107c41"/></svg>
<div class="t" style="left:194.6px;top:309px;font-size:13px;color:#000;letter-spacing:-1.2px;transform:scaleX(0.89);transform-origin:0 0;line-height:17px;">US</div>
<div class="t" style="left:261.56px;top:309px;font-size:13.5px;color:#000;letter-spacing:0.011px;line-height:17px;">Food and Cooking</div>
<div class="t" style="left:431.95px;top:309px;font-size:13.5px;color:#000;letter-spacing:-1.435px;line-height:17px;">F</div>
<div class="t" style="left:492px;top:309px;font-size:12.8px;color:#000;width:112px;text-align:right;line-height:17px;">94,300</div>
<div class="t" style="left:611px;top:309px;font-size:12.8px;color:#000;width:117.5px;text-align:right;line-height:17px;">1.35%</div>
<div class="t" style="left:730px;top:309px;font-size:12.8px;color:#000;width:113px;text-align:right;line-height:17px;">1,284</div>
<div class="t" style="left:849px;top:309px;font-size:12.8px;color:#000;width:118px;text-align:right;line-height:17px;">43</div>
<div class="t" style="left:968px;top:309px;font-size:12.8px;color:#000;width:118px;text-align:right;line-height:17px;">2.71</div>
<div class="t" style="left:1089.58px;top:309px;font-size:13.2px;color:#006100;font-weight:700;letter-spacing:-0.015px;line-height:17px;">yes</div>
<div class="b" style="left:27px;top:326px;width:1248px;height:1px;background:#4472c4;"></div>
<div class="t" style="left:30.5px;top:329px;font-size:12.8px;color:#000;letter-spacing:0.047px;line-height:17px;">#VALUE!</div>
<svg class="b" style="left:27px;top:327px" width="6" height="6"><path d="M0 0 H6 L0 6 Z" fill="#107c41"/></svg>
<div class="t" style="left:194.6px;top:329px;font-size:13px;color:#000;letter-spacing:-1.2px;transform:scaleX(0.89);transform-origin:0 0;line-height:17px;">US</div>
<div class="t" style="left:261.56px;top:329px;font-size:13.5px;color:#000;letter-spacing:-0.002px;line-height:17px;">Fashion</div>
<div class="t" style="left:431.95px;top:329px;font-size:13.5px;color:#000;letter-spacing:-1.435px;line-height:17px;">F</div>
<div class="t" style="left:492px;top:329px;font-size:12.8px;color:#000;width:112px;text-align:right;line-height:17px;">99,300</div>
<div class="t" style="left:611px;top:329px;font-size:12.8px;color:#000;width:117.5px;text-align:right;line-height:17px;">6.26%</div>
<div class="t" style="left:730px;top:329px;font-size:12.8px;color:#000;width:113px;text-align:right;line-height:17px;">8,408</div>
<div class="t" style="left:849px;top:329px;font-size:12.8px;color:#000;width:118px;text-align:right;line-height:17px;">22</div>
<div class="t" style="left:968px;top:329px;font-size:12.8px;color:#000;width:118px;text-align:right;line-height:17px;">7</div>
<div class="t" style="left:1089.58px;top:329px;font-size:13.2px;color:#006100;font-weight:700;letter-spacing:-0.015px;line-height:17px;">yes</div>
<div class="b" style="left:27px;top:346px;width:1248px;height:1px;background:#4472c4;"></div>
<div class="t" style="left:30.5px;top:349px;font-size:12.8px;color:#000;letter-spacing:0.047px;line-height:17px;">#VALUE!</div>
<svg class="b" style="left:27px;top:347px" width="6" height="6"><path d="M0 0 H6 L0 6 Z" fill="#107c41"/></svg>
<div class="t" style="left:194.6px;top:349px;font-size:13px;color:#000;letter-spacing:-1.2px;transform:scaleX(0.89);transform-origin:0 0;line-height:17px;">US</div>
<div class="t" style="left:261.56px;top:349px;font-size:13.5px;color:#000;letter-spacing:-0.002px;line-height:17px;">Fashion</div>
<div class="t" style="left:431.95px;top:349px;font-size:13.5px;color:#000;letter-spacing:-1.435px;line-height:17px;">F</div>
<div class="t" style="left:492px;top:349px;font-size:12.8px;color:#000;width:112px;text-align:right;line-height:17px;">97,500</div>
<div class="t" style="left:611px;top:349px;font-size:12.8px;color:#000;width:117.5px;text-align:right;line-height:17px;">1.68%</div>
<div class="t" style="left:730px;top:349px;font-size:12.8px;color:#000;width:113px;text-align:right;line-height:17px;">1,557</div>
<div class="t" style="left:849px;top:349px;font-size:12.8px;color:#000;width:118px;text-align:right;line-height:17px;">7</div>
<div class="t" style="left:968px;top:349px;font-size:12.8px;color:#000;width:118px;text-align:right;line-height:17px;">4.94</div>
<div class="t" style="left:1089.58px;top:349px;font-size:13.2px;color:#006100;font-weight:700;letter-spacing:-0.015px;line-height:17px;">yes</div>
<div class="b" style="left:27px;top:366px;width:1248px;height:1px;background:#4472c4;"></div>
<div class="t" style="left:30.5px;top:369px;font-size:12.8px;color:#000;letter-spacing:0.047px;line-height:17px;">#VALUE!</div>
<svg class="b" style="left:27px;top:367px" width="6" height="6"><path d="M0 0 H6 L0 6 Z" fill="#107c41"/></svg>
<div class="t" style="left:194.6px;top:369px;font-size:13px;color:#000;letter-spacing:-1.2px;transform:scaleX(0.89);transform-origin:0 0;line-height:17px;">US</div>
<div class="t" style="left:261.56px;top:369px;font-size:13.5px;color:#000;letter-spacing:-0.002px;line-height:17px;">Fashion</div>
<div class="t" style="left:431.95px;top:369px;font-size:13.5px;color:#000;letter-spacing:-1.435px;line-height:17px;">F</div>
<div class="t" style="left:492px;top:369px;font-size:12.8px;color:#000;width:112px;text-align:right;line-height:17px;">93,500</div>
<div class="t" style="left:611px;top:369px;font-size:12.8px;color:#000;width:117.5px;text-align:right;line-height:17px;">3.05%</div>
<div class="t" style="left:730px;top:369px;font-size:12.8px;color:#000;width:113px;text-align:right;line-height:17px;">3,331</div>
<div class="t" style="left:849px;top:369px;font-size:12.8px;color:#000;width:118px;text-align:right;line-height:17px;">3</div>
<div class="t" style="left:968px;top:369px;font-size:12.8px;color:#000;width:118px;text-align:right;line-height:17px;">14</div>
<div class="b" style="left:27px;top:386px;width:1248px;height:1px;background:#4472c4;"></div>
<div class="t" style="left:30.5px;top:389px;font-size:12.8px;color:#000;letter-spacing:0.047px;line-height:17px;">#VALUE!</div>
<svg class="b" style="left:27px;top:387px" width="6" height="6"><path d="M0 0 H6 L0 6 Z" fill="#107c41"/></svg>
<div class="t" style="left:194.6px;top:389px;font-size:13px;color:#000;letter-spacing:-1.2px;transform:scaleX(0.89);transform-origin:0 0;line-height:17px;">US</div>
<div class="t" style="left:261.56px;top:389px;font-size:13.5px;color:#000;letter-spacing:-0.118px;line-height:17px;">DIY / Design / Landscape</div>
<div class="t" style="left:431.95px;top:389px;font-size:13.5px;color:#000;letter-spacing:-1.435px;line-height:17px;">F</div>
<div class="t" style="left:492px;top:389px;font-size:12.8px;color:#000;width:112px;text-align:right;line-height:17px;">97,400</div>
<div class="t" style="left:611px;top:389px;font-size:12.8px;color:#000;width:117.5px;text-align:right;line-height:17px;">6.95%</div>
<div class="t" style="left:730px;top:389px;font-size:12.8px;color:#000;width:113px;text-align:right;line-height:17px;">7,571</div>
<div class="t" style="left:849px;top:389px;font-size:12.8px;color:#000;width:118px;text-align:right;line-height:17px;">48</div>
<div class="t" style="left:968px;top:389px;font-size:12.8px;color:#000;width:118px;text-align:right;line-height:17px;">6</div>
<div class="b" style="left:27px;top:406px;width:1248px;height:1px;background:#4472c4;"></div>
<div class="t" style="left:30.5px;top:409px;font-size:12.8px;color:#000;letter-spacing:0.047px;line-height:17px;">#VALUE!</div>
<svg class="b" style="left:27px;top:407px" width="6" height="6"><path d="M0 0 H6 L0 6 Z" fill="#107c41"/></svg>
<div class="t" style="left:194.6px;top:409px;font-size:13px;color:#000;letter-spacing:-1.2px;transform:scaleX(0.89);transform-origin:0 0;line-height:17px;">US</div>
<div class="t" style="left:261.56px;top:409px;font-size:13.5px;color:#000;letter-spacing:-0.127px;line-height:17px;">DIY / Design</div>
<div class="t" style="left:431.95px;top:409px;font-size:13.5px;color:#000;letter-spacing:-1.435px;line-height:17px;">F</div>
<div class="t" style="left:492px;top:409px;font-size:12.8px;color:#000;width:112px;text-align:right;line-height:17px;">94,400</div>
<div class="t" style="left:611px;top:409px;font-size:12.8px;color:#000;width:117.5px;text-align:right;line-height:17px;">17.00%</div>
<div class="t" style="left:730px;top:409px;font-size:12.8px;color:#000;width:113px;text-align:right;line-height:17px;">16,346</div>
<div class="t" style="left:849px;top:409px;font-size:12.8px;color:#000;width:118px;text-align:right;line-height:17px;">105</div>
<div class="t" style="left:968px;top:409px;font-size:12.8px;color:#000;width:118px;text-align:right;line-height:17px;">0.45</div>
<div class="t" style="left:1089.58px;top:409px;font-size:13.2px;color:#006100;font-weight:700;letter-spacing:-0.015px;line-height:17px;">yes</div>
<div class="b" style="left:27px;top:426px;width:1248px;height:1px;background:#4472c4;"></div>
<div class="t" style="left:30.5px;top:429px;font-size:12.8px;color:#000;letter-spacing:0.047px;line-height:17px;">#VALUE!</div>
<svg class="b" style="left:27px;top:427px" width="6" height="6"><path d="M0 0 H6 L0 6 Z" fill="#107c41"/></svg>
<div class="t" style="left:194.6px;top:429px;font-size:13px;color:#000;letter-spacing:-1.2px;transform:scaleX(0.89);transform-origin:0 0;line-height:17px;">US</div>
<div class="t" style="left:261.56px;top:429px;font-size:13.5px;color:#000;letter-spacing:-0.127px;line-height:17px;">DIY / Design</div>
<div class="t" style="left:431.95px;top:429px;font-size:13.5px;color:#000;letter-spacing:-1.435px;line-height:17px;">F</div>
<div class="t" style="left:492px;top:429px;font-size:12.8px;color:#000;width:112px;text-align:right;line-height:17px;">98,000</div>
<div class="t" style="left:611px;top:429px;font-size:12.8px;color:#000;width:117.5px;text-align:right;line-height:17px;">1.67%</div>
<div class="t" style="left:730px;top:429px;font-size:12.8px;color:#000;width:113px;text-align:right;line-height:17px;">1,385</div>
<div class="t" style="left:849px;top:429px;font-size:12.8px;color:#000;width:118px;text-align:right;line-height:17px;">89</div>
<div class="t" style="left:968px;top:429px;font-size:12.8px;color:#000;width:118px;text-align:right;line-height:17px;">10.5</div>
<div class="t" style="left:1089.58px;top:429px;font-size:13.2px;color:#006100;font-weight:700;letter-spacing:-0.015px;line-height:17px;">yes</div>
<div class="b" style="left:27px;top:446px;width:1248px;height:1px;background:#4472c4;"></div>
<div class="t" style="left:27px;top:449px;font-size:12.8px;color:#000;width:58px;text-align:right;line-height:17px;">1</div>
<svg class="b" style="left:27px;top:447px" width="6" height="6"><path d="M0 0 H6 L0 6 Z" fill="#107c41"/></svg>
<div class="t" style="left:194.6px;top:449px;font-size:13px;color:#000;letter-spacing:-1.2px;transform:scaleX(0.89);transform-origin:0 0;line-height:17px;">US</div>
<div class="t" style="left:261.56px;top:449px;font-size:13.5px;color:#000;letter-spacing:0.128px;line-height:17px;">Clothing and Beauty</div>
<div class="t" style="left:431.95px;top:449px;font-size:13.5px;color:#000;letter-spacing:-1.435px;line-height:17px;">F</div>
<div class="t" style="left:492px;top:449px;font-size:12.8px;color:#000;width:112px;text-align:right;line-height:17px;">53,000</div>
<div class="t" style="left:611px;top:449px;font-size:12.8px;color:#000;width:117.5px;text-align:right;line-height:17px;">1.41%</div>
<div class="t" style="left:730px;top:449px;font-size:12.8px;color:#000;width:113px;text-align:right;line-height:17px;">591</div>
<div class="t" style="left:849px;top:449px;font-size:12.8px;color:#000;width:118px;text-align:right;line-height:17px;">20</div>
<div class="t" style="left:968px;top:449px;font-size:12.8px;color:#000;width:118px;text-align:right;line-height:17px;">6.46</div>
<div class="t" style="left:1089.58px;top:449px;font-size:13.2px;color:#006100;font-weight:700;letter-spacing:-0.015px;line-height:17px;">yes</div>
<div class="b" style="left:27px;top:466px;width:1248px;height:1px;background:#4472c4;"></div>
<div class="t" style="left:27px;top:469px;font-size:12.8px;color:#000;width:58px;text-align:right;line-height:17px;">2</div>
<div class="t" style="left:194.6px;top:469px;font-size:13px;color:#000;letter-spacing:-1.2px;transform:scaleX(0.89);transform-origin:0 0;line-height:17px;">US</div>
<div class="t" style="left:261.56px;top:469px;font-size:13.5px;color:#000;letter-spacing:0.248px;line-height:17px;">Cartoonist</div>
<div class="t" style="left:431.95px;top:469px;font-size:13.5px;color:#000;letter-spacing:-1.435px;line-height:17px;">F</div>
<div class="t" style="left:492px;top:469px;font-size:12.8px;color:#000;width:112px;text-align:right;line-height:17px;">94,100</div>
<div class="t" style="left:611px;top:469px;font-size:12.8px;color:#000;width:117.5px;text-align:right;line-height:17px;">5.74%</div>
<div class="t" style="left:730px;top:469px;font-size:12.8px;color:#000;width:113px;text-align:right;line-height:17px;">5,323</div>
<div class="t" style="left:849px;top:469px;font-size:12.8px;color:#000;width:118px;text-align:right;line-height:17px;">92</div>
<div class="t" style="left:968px;top:469px;font-size:12.8px;color:#000;width:118px;text-align:right;line-height:17px;">3.65</div>
<div class="b" style="left:27px;top:486px;width:1248px;height:1px;background:#4472c4;"></div>
<div class="t" style="left:27px;top:489px;font-size:12.8px;color:#000;width:58px;text-align:right;line-height:17px;">3</div>
<div class="t" style="left:194.6px;top:489px;font-size:13px;color:#000;letter-spacing:-1.2px;transform:scaleX(0.89);transform-origin:0 0;line-height:17px;">US</div>
<div class="t" style="left:261.56px;top:489px;font-size:13.5px;color:#000;letter-spacing:0.164px;line-height:17px;">Beauty</div>
<div class="t" style="left:431.95px;top:489px;font-size:13.5px;color:#000;letter-spacing:-1.435px;line-height:17px;">F</div>
<div class="t" style="left:492px;top:489px;font-size:12.8px;color:#000;width:112px;text-align:right;line-height:17px;">21,602</div>
<div class="t" style="left:611px;top:489px;font-size:12.8px;color:#000;width:117.5px;text-align:right;line-height:17px;">6.99%</div>
<div class="t" style="left:730px;top:489px;font-size:12.8px;color:#000;width:113px;text-align:right;line-height:17px;">1,537</div>
<div class="t" style="left:849px;top:489px;font-size:12.8px;color:#000;width:118px;text-align:right;line-height:17px;">19</div>
<div class="t" style="left:968px;top:489px;font-size:12.8px;color:#000;width:118px;text-align:right;line-height:17px;">2.71</div>
<div class="b" style="left:27px;top:506px;width:1248px;height:1px;background:#4472c4;"></div>
<div class="t" style="left:27px;top:509px;font-size:12.8px;color:#000;width:58px;text-align:right;line-height:17px;">4</div>
<div class="t" style="left:194.6px;top:509px;font-size:13px;color:#000;letter-spacing:-1.2px;transform:scaleX(0.89);transform-origin:0 0;line-height:17px;">US</div>
<div class="t" style="left:261.56px;top:509px;font-size:13.5px;color:#000;letter-spacing:0.637px;line-height:17px;">Art/Artists</div>
<div class="t" style="left:431.95px;top:509px;font-size:13.5px;color:#000;letter-spacing:0.869px;line-height:17px;">N/A</div>
<div class="t" style="left:492px;top:509px;font-size:12.8px;color:#000;width:112px;text-align:right;line-height:17px;">29,800</div>
<div class="t" style="left:611px;top:509px;font-size:12.8px;color:#000;width:117.5px;text-align:right;line-height:17px;">42.60%</div>
<div class="t" style="left:730px;top:509px;font-size:12.8px;color:#000;width:113px;text-align:right;line-height:17px;">30,307</div>
<div class="t" style="left:849px;top:509px;font-size:12.8px;color:#000;width:118px;text-align:right;line-height:17px;">199</div>
<div class="t" style="left:968px;top:509px;font-size:12.8px;color:#000;width:118px;text-align:right;line-height:17px;">0.57</div>
<div class="b" style="left:27px;top:526px;width:1248px;height:1px;background:#4472c4;"></div>
<div class="t" style="left:27px;top:529px;font-size:12.8px;color:#000;width:58px;text-align:right;line-height:17px;">5</div>
<div class="t" style="left:194.6px;top:529px;font-size:13px;color:#000;letter-spacing:-1.2px;transform:scaleX(0.89);transform-origin:0 0;line-height:17px;">US</div>
<div class="t" style="left:261.56px;top:529px;font-size:13.5px;color:#000;letter-spacing:0.637px;line-height:17px;">Art/Artists</div>
<div class="t" style="left:431.95px;top:529px;font-size:13.5px;color:#000;letter-spacing:0.866px;line-height:17px;">M</div>
<div class="t" style="left:492px;top:529px;font-size:12.8px;color:#000;width:112px;text-align:right;line-height:17px;">99,900</div>
<div class="t" style="left:611px;top:529px;font-size:12.8px;color:#000;width:117.5px;text-align:right;line-height:17px;">5.31%</div>
<div class="t" style="left:730px;top:529px;font-size:12.8px;color:#000;width:113px;text-align:right;line-height:17px;">7,473</div>
<div class="t" style="left:849px;top:529px;font-size:12.8px;color:#000;width:118px;text-align:right;line-height:17px;">47</div>
<div class="t" style="left:968px;top:529px;font-size:12.8px;color:#000;width:118px;text-align:right;line-height:17px;">1.87</div>
<div class="t" style="left:1089.58px;top:529px;font-size:13.2px;color:#006100;font-weight:700;letter-spacing:-0.015px;line-height:17px;">yes</div>
<div class="b" style="left:27px;top:546px;width:1248px;height:1px;background:#4472c4;"></div>
<div class="t" style="left:27px;top:549px;font-size:12.8px;color:#000;width:58px;text-align:right;line-height:17px;">6</div>
<div class="t" style="left:194.6px;top:549px;font-size:13px;color:#000;letter-spacing:-1.2px;transform:scaleX(0.89);transform-origin:0 0;line-height:17px;">US</div>
<div class="t" style="left:261.56px;top:549px;font-size:13.5px;color:#000;letter-spacing:0.637px;line-height:17px;">Art/Artists</div>
<div class="t" style="left:431.95px;top:549px;font-size:13.5px;color:#000;letter-spacing:0.866px;line-height:17px;">M</div>
<div class="t" style="left:492px;top:549px;font-size:12.8px;color:#000;width:112px;text-align:right;line-height:17px;">99,900</div>
<div class="t" style="left:611px;top:549px;font-size:12.8px;color:#000;width:117.5px;text-align:right;line-height:17px;">1.48%</div>
<div class="t" style="left:730px;top:549px;font-size:12.8px;color:#000;width:113px;text-align:right;line-height:17px;">1,562</div>
<div class="t" style="left:849px;top:549px;font-size:12.8px;color:#000;width:118px;text-align:right;line-height:17px;">54</div>
<div class="t" style="left:968px;top:549px;font-size:12.8px;color:#000;width:118px;text-align:right;line-height:17px;">2.55</div>
<div class="b" style="left:27px;top:566px;width:1248px;height:1px;background:#4472c4;"></div>
<div class="t" style="left:27px;top:569px;font-size:12.8px;color:#000;width:58px;text-align:right;line-height:17px;">7</div>
<div class="t" style="left:194.6px;top:569px;font-size:13px;color:#000;letter-spacing:-1.2px;transform:scaleX(0.89);transform-origin:0 0;line-height:17px;">US</div>
<div class="t" style="left:261.56px;top:569px;font-size:13.5px;color:#000;letter-spacing:0.415px;line-height:17px;">Architecture</div>
<div class="t" style="left:431.95px;top:569px;font-size:13.5px;color:#000;letter-spacing:0.869px;line-height:17px;">N/A</div>
<div class="t" style="left:492px;top:569px;font-size:12.8px;color:#000;width:112px;text-align:right;line-height:17px;">20,900</div>
<div class="t" style="left:611px;top:569px;font-size:12.8px;color:#000;width:117.5px;text-align:right;line-height:17px;">4.13%</div>
<div class="t" style="left:730px;top:569px;font-size:12.8px;color:#000;width:113px;text-align:right;line-height:17px;">813</div>
<div class="t" style="left:849px;top:569px;font-size:12.8px;color:#000;width:118px;text-align:right;line-height:17px;">24</div>
<div class="t" style="left:968px;top:569px;font-size:12.8px;color:#000;width:118px;text-align:right;line-height:17px;">0.26</div>
<div class="b" style="left:27px;top:586px;width:1248px;height:1px;background:#4472c4;"></div>
<div class="t" style="left:27px;top:589px;font-size:12.8px;color:#000;width:58px;text-align:right;line-height:17px;">8</div>
<div class="t" style="left:194.6px;top:589px;font-size:13px;color:#000;letter-spacing:-1.2px;transform:scaleX(0.89);transform-origin:0 0;line-height:17px;">US</div>
<div class="t" style="left:261.56px;top:589px;font-size:13.5px;color:#000;letter-spacing:0.415px;line-height:17px;">Architecture</div>
<div class="t" style="left:431.95px;top:589px;font-size:13.5px;color:#000;letter-spacing:0.869px;line-height:17px;">N/A</div>
<div class="t" style="left:492px;top:589px;font-size:12.8px;color:#000;width:112px;text-align:right;line-height:17px;">21,800</div>
<div class="t" style="left:611px;top:589px;font-size:12.8px;color:#000;width:117.5px;text-align:right;line-height:17px;">1.24%</div>
<div class="t" style="left:730px;top:589px;font-size:12.8px;color:#000;width:113px;text-align:right;line-height:17px;">334</div>
<div class="t" style="left:849px;top:589px;font-size:12.8px;color:#000;width:118px;text-align:right;line-height:17px;">4</div>
<div class="t" style="left:968px;top:589px;font-size:12.8px;color:#000;width:118px;text-align:right;line-height:17px;">3.36</div>
<div class="b" style="left:27px;top:606px;width:1248px;height:1px;background:#4472c4;"></div>
<div class="t" style="left:27px;top:609px;font-size:12.8px;color:#000;width:58px;text-align:right;line-height:17px;">9</div>
<div class="t" style="left:194.6px;top:609px;font-size:13px;color:#000;letter-spacing:-1.2px;transform:scaleX(0.89);transform-origin:0 0;line-height:17px;">US</div>
<div class="t" style="left:261.56px;top:609px;font-size:13.5px;color:#000;letter-spacing:0.356px;line-height:17px;">Animals</div>
<div class="t" style="left:431.95px;top:609px;font-size:13.5px;color:#000;letter-spacing:0.869px;line-height:17px;">N/A</div>
<div class="t" style="left:492px;top:609px;font-size:12.8px;color:#000;width:112px;text-align:right;line-height:17px;">43,800</div>
<div class="t" style="left:611px;top:609px;font-size:12.8px;color:#000;width:117.5px;text-align:right;line-height:17px;">2.66%</div>
<div class="t" style="left:730px;top:609px;font-size:12.8px;color:#000;width:113px;text-align:right;line-height:17px;">1,200</div>
<div class="t" style="left:849px;top:609px;font-size:12.8px;color:#000;width:118px;text-align:right;line-height:17px;">27</div>
<div class="t" style="left:968px;top:609px;font-size:12.8px;color:#000;width:118px;text-align:right;line-height:17px;">5.25</div>
<div class="t" style="left:1089.58px;top:609px;font-size:13.2px;color:#006100;font-weight:700;letter-spacing:-0.015px;line-height:17px;">yes</div>
<div class="b" style="left:27px;top:626px;width:1248px;height:1px;background:#4472c4;"></div>
<div class="t" style="left:27px;top:629px;font-size:12.8px;color:#000;width:58px;text-align:right;line-height:17px;">10</div>
<div class="t" style="left:194.6px;top:629px;font-size:13px;color:#000;letter-spacing:-1.2px;transform:scaleX(0.89);transform-origin:0 0;line-height:17px;">US</div>
<div class="t" style="left:261.56px;top:629px;font-size:13.5px;color:#000;letter-spacing:0.356px;line-height:17px;">Animals</div>
<div class="t" style="left:431.95px;top:629px;font-size:13.5px;color:#000;letter-spacing:0.869px;line-height:17px;">N/A</div>
<div class="t" style="left:492px;top:629px;font-size:12.8px;color:#000;width:112px;text-align:right;line-height:17px;">21,600</div>
<div class="t" style="left:611px;top:629px;font-size:12.8px;color:#000;width:117.5px;text-align:right;line-height:17px;">4.21%</div>
<div class="t" style="left:730px;top:629px;font-size:12.8px;color:#000;width:113px;text-align:right;line-height:17px;">1,023</div>
<div class="t" style="left:849px;top:629px;font-size:12.8px;color:#000;width:118px;text-align:right;line-height:17px;">18</div>
<div class="t" style="left:968px;top:629px;font-size:12.8px;color:#000;width:118px;text-align:right;line-height:17px;">1.22</div>
<div class="b" style="left:27px;top:646px;width:1248px;height:1px;background:#4472c4;"></div>
<div class="t" style="left:27px;top:649px;font-size:12.8px;color:#000;width:58px;text-align:right;line-height:17px;">11</div>
<div class="t" style="left:194.6px;top:649px;font-size:13px;color:#000;letter-spacing:-1.2px;transform:scaleX(0.89);transform-origin:0 0;line-height:17px;">US</div>
<div class="t" style="left:261.56px;top:649px;font-size:13.5px;color:#000;letter-spacing:0.356px;line-height:17px;">Animals</div>
<div class="t" style="left:431.95px;top:649px;font-size:13.5px;color:#000;letter-spacing:0.869px;line-height:17px;">N/A</div>
<div class="t" style="left:492px;top:649px;font-size:12.8px;color:#000;width:112px;text-align:right;line-height:17px;">60,600</div>
<div class="t" style="left:611px;top:649px;font-size:12.8px;color:#000;width:117.5px;text-align:right;line-height:17px;">1.59%</div>
<div class="t" style="left:730px;top:649px;font-size:12.8px;color:#000;width:113px;text-align:right;line-height:17px;">930</div>
<div class="t" style="left:849px;top:649px;font-size:12.8px;color:#000;width:118px;text-align:right;line-height:17px;">12</div>
<div class="t" style="left:968px;top:649px;font-size:12.8px;color:#000;width:118px;text-align:right;line-height:17px;">3.82</div>
<div class="t" style="left:1089.58px;top:649px;font-size:13.2px;color:#006100;font-weight:700;letter-spacing:-0.015px;line-height:17px;">yes</div>
<div class="b" style="left:27px;top:666px;width:1248px;height:1px;background:#4472c4;"></div>
<div class="t" style="left:27px;top:669px;font-size:12.8px;color:#000;width:58px;text-align:right;line-height:17px;">12</div>
<div class="t" style="left:194.6px;top:669px;font-size:13px;color:#000;letter-spacing:-1.2px;transform:scaleX(0.89);transform-origin:0 0;line-height:17px;">US</div>
<div class="t" style="left:261.56px;top:669px;font-size:13.5px;color:#000;letter-spacing:0.356px;line-height:17px;">Animals</div>
<div class="t" style="left:431.95px;top:669px;font-size:13.5px;color:#000;letter-spacing:0.866px;line-height:17px;">M</div>
<div class="t" style="left:492px;top:669px;font-size:12.8px;color:#000;width:112px;text-align:right;line-height:17px;">94,100</div>
<div class="t" style="left:611px;top:669px;font-size:12.8px;color:#000;width:117.5px;text-align:right;line-height:17px;">2.53%</div>
<div class="t" style="left:730px;top:669px;font-size:12.8px;color:#000;width:113px;text-align:right;line-height:17px;">2,263</div>
<div class="t" style="left:849px;top:669px;font-size:12.8px;color:#000;width:118px;text-align:right;line-height:17px;">67</div>
<div class="t" style="left:968px;top:669px;font-size:12.8px;color:#000;width:118px;text-align:right;line-height:17px;">8.4</div>
<div class="b" style="left:27px;top:686px;width:1248px;height:1px;background:#4472c4;"></div>
<div class="b" style="left:258px;top:485px;width:173px;height:23px;border:2px solid #217346;"></div>
<div class="b" style="left:426.5px;top:503.5px;width:6.5px;height:6.5px;background:#217346;border:1px solid #fff;"></div>
<div class="b" style="left:610px;top:267px;width:2px;height:411px;background:repeating-linear-gradient(180deg,#0000d2 0,#0000d2 9.5px,transparent 9.5px,transparent 12px)"></div>
<div class="b" style="left:610px;top:243px;width:2px;height:9px;background:#0000d2;"></div>
<div class="b" style="left:1205px;top:267px;width:2px;height:411px;background:repeating-linear-gradient(180deg,#0000d2 0,#0000d2 9.5px,transparent 9.5px,transparent 12px)"></div>
<div class="b" style="left:1205px;top:243px;width:2px;height:9px;background:#0000d2;"></div>
<div class="b" style="left:610px;top:231px;width:2px;height:10px;background:#0000d2;"></div>
<div class="b" style="left:610px;top:252px;width:2px;height:14px;background:#000;"></div>
<div class="b" style="left:1205px;top:228px;width:2px;height:3px;background:#0000d2;"></div>
<div class="b" style="left:1205px;top:231px;width:2px;height:12px;background:#000;"></div>
<div class="b" style="left:1205px;top:252px;width:2px;height:14px;background:#000;"></div>
<div class="b" style="left:26px;top:227px;width:1252px;height:1px;background:#0000d2;"></div>
<div class="b" style="left:26px;top:227px;width:1px;height:451px;background:#0000d2;"></div>
<div class="b" style="left:1275px;top:227px;width:3px;height:451px;background:#0000d2;"></div>
<div class="b" style="left:1345px;top:207px;width:21px;height:471px;background:#e6e6e6;"></div>
<div class="b" style="left:1348px;top:224px;width:15px;height:440px;background:#dbdbdb;"></div>
<div class="b" style="left:1348px;top:209px;width:15px;height:15px;background:#fff;border:1px solid #c9c9c9;"></div>
<svg class="b" style="left:1352px;top:214px" width="8" height="5"><path d="M0 4.5 H7.4 L3.7 0.3 Z" fill="#606060"/></svg>
<div class="b" style="left:1348px;top:312px;width:15px;height:291px;background:#fff;border:1px solid #c9c9c9;"></div>
<div class="b" style="left:1348px;top:663px;width:15px;height:15px;background:#fff;border:1px solid #c9c9c9;"></div>
<svg class="b" style="left:1352px;top:669px" width="8" height="5"><path d="M0 0.3 H7.4 L3.7 4.5 Z" fill="#606060"/></svg>
<div class="b" style="left:0px;top:678px;width:1366px;height:28px;background:#e6e6e6;"></div>
<div class="b" style="left:0px;top:705px;width:1366px;height:1px;background:#d4d4d4;"></div>
<div class="b" style="left:0px;top:678px;width:1345px;height:1px;background:#b1b1b1;"></div>
<svg class="b" style="left:26px;top:687px" width="6" height="9"><path d="M5.5 0.5 L0.5 4.5 L5.5 8.5 Z" fill="#c3c3c3"/></svg>
<svg class="b" style="left:55px;top:687px" width="6" height="9"><path d="M0.5 0.5 L5.5 4.5 L0.5 8.5 Z" fill="#c3c3c3"/></svg>
<div class="b" style="left:100px;top:679px;width:65px;height:24px;background:#fff;border-bottom:2px solid #217346;"></div>
<div class="t" style="left:111.09px;top:684px;font-size:13px;color:#217346;font-weight:700;letter-spacing:-0.196px;">Sheet1</div>
<svg class="b" style="left:197px;top:683px;" width="18" height="18" viewBox="0 0 18 18"><circle cx="9" cy="9" r="7.5" fill="none" stroke="#8a8a8a" stroke-width="1.2"/><path d="M9 5 V13 M5 9 H13" stroke="#6a6a6a" stroke-width="1.4"/></svg>
<div class="b" style="left:819px;top:686px;width:2px;height:2px;background:#a6a6a6;"></div>
<div class="b" style="left:819px;top:690px;width:2px;height:2px;background:#a6a6a6;"></div>
<div class="b" style="left:819px;top:694px;width:2px;height:2px;background:#a6a6a6;"></div>
<div class="b" style="left:836px;top:685px;width:15px;height:15px;background:#fff;border:1px solid #c9c9c9;"></div>
<svg class="b" style="left:841px;top:688px" width="5" height="8"><path d="M5 0 V8 L0 4 Z" fill="#606060"/></svg>
<div class="b" style="left:851px;top:685px;width:477px;height:15px;background:#dbdbdb;"></div>
<div class="b" style="left:851px;top:685px;width:439px;height:15px;background:#fff;border:1px solid #c9c9c9;"></div>
<div class="b" style="left:1327px;top:685px;width:15px;height:15px;background:#fff;border:1px solid #c9c9c9;"></div>
<svg class="b" style="left:1332px;top:688px" width="5" height="8"><path d="M0 0 V8 L5 4 Z" fill="#606060"/></svg>
<div class="b" style="left:0px;top:706px;width:1366px;height:22px;background:#f3f2f1;"></div>
<div class="t" style="left:6.66px;top:711px;font-size:12px;color:#444;letter-spacing:-0.569px;">Ready</div>
<svg class="b" style="left:1079px;top:710px;" width="14" height="13" viewBox="0 0 14 13"><rect x="0.5" y="0.5" width="13" height="12" fill="none" stroke="#555"/><path d="M0.5 4.5 H13.5 M0.5 8.5 H13.5 M5 0.5 V12.5 M9.5 0.5 V12.5" stroke="#555" fill="none"/></svg>
<svg class="b" style="left:1119px;top:710px;" width="14" height="13" viewBox="0 0 14 13"><rect x="0.5" y="0.5" width="13" height="12" fill="none" stroke="#555"/><rect x="3.5" y="3.5" width="7" height="6" fill="none" stroke="#555"/><path d="M5 5.5 H9 M5 7.5 H9" stroke="#555"/></svg>
<div class="b" style="left:1146px;top:706px;width:40px;height:22px;background:#c8c8c8;"></div>
<svg class="b" style="left:1159px;top:709px;" width="14" height="13" viewBox="0 0 14 13"><rect x="0.5" y="0.5" width="13" height="12" fill="none" stroke="#444"/><path d="M3.5 0.5 V6.5 H9.5 V0.5" fill="none" stroke="#444"/></svg>
<div class="b" style="left:1192px;top:716px;width:8px;height:1px;background:#444;"></div>
<div class="b" style="left:1206px;top:716px;width:99px;height:1px;background:#8a8a8a;"></div>
<div class="b" style="left:1253px;top:711px;width:5px;height:12px;background:#5a5a5a;"></div>
<div class="b" style="left:1309.5px;top:716px;width:9px;height:1px;background:#444;"></div>
<div class="b" style="left:1313.5px;top:712px;width:1px;height:9px;background:#444;"></div>
<div class="t" style="left:1330.96px;top:711px;font-size:12px;color:#444;letter-spacing:-0.787px;">100%</div>
<div class="b" style="left:0px;top:728px;width:1366px;height:40px;background:#1f1f1f;"></div>
<svg class="b" style="left:16px;top:740px;" width="16.5" height="16.5" viewBox="0 0 17 17"><path d="M0 2.4 L7 1.4 V8 H0 Z M8 1.25 L17 0 V8 H8 Z M0 9 H7 V15.6 L0 14.6 Z M8 9 H17 V17 L8 15.75 Z" fill="#fff"/></svg>
<svg class="b" style="left:63px;top:739px;" width="18" height="18" viewBox="0 0 18 18"><circle cx="11" cy="7" r="5.6" fill="none" stroke="#fff" stroke-width="1.5"/><path d="M7 11 L1 17" stroke="#fff" stroke-width="1.6"/></svg>
<svg class="b" style="left:111px;top:739px;" width="19" height="17" viewBox="0 0 19 17"><rect x="1.4" y="4.4" width="9.4" height="7.4" fill="none" stroke="#fff" stroke-width="1.3"/><path d="M0.8 1.4 H11.4 M0.8 14.8 H11.4" stroke="#fff" stroke-width="1.3" fill="none"/><path d="M15.4 3.8 V12.4" stroke="#fff" stroke-width="1.8"/><path d="M15.4 0.6 V2.4 M15.4 13.8 V15.6" stroke="#fff" stroke-width="1.3"/></svg>
<svg class="b" style="left:160px;top:737px;" width="23" height="20" viewBox="0 0 23 20"><path d="M0 2 Q0 1 1 1 H8 L10 3.5 H22 Q23 3.5 23 4.5 V17 H0 Z" fill="#f9c642"/><path d="M0 6 H23 V17 H0 Z" fill="#fcd766"/><rect x="6" y="11" width="11" height="8" fill="#3a8ee6"/><rect x="9" y="14.5" width="5" height="4.5" fill="#fcd766"/></svg>
<svg class="b" style="left:207px;top:735px;" width="24" height="24" viewBox="0 0 24 24"><path d="M8 7 V5 Q8 1 12 1 Q16 1 16 5 V7" fill="none" stroke="#fff" stroke-width="1.4"/><path d="M1 7 H23 V21 Q23 23 21 23 H3 Q1 23 1 21 Z" fill="#fff"/><rect x="6.5" y="10" width="5" height="5" fill="#f25022"/><rect x="12.5" y="10" width="5" height="5" fill="#7fba00"/><rect x="6.5" y="16" width="5" height="5" fill="#00a4ef"/><rect x="12.5" y="16" width="5" height="5" fill="#ffb900"/></svg>
<div class="b" style="left:257px;top:736px;width:23px;height:24px;background:linear-gradient(100deg,#f0d4cc 0%,#c8483e 28%,#7a1212 58%,#2e0707 100%);"></div>
<div class="b" style="left:262px;top:745px;width:14px;height:10px;background:radial-gradient(#e02020 0%,#8c1414 45%,#3a0808 100%);border-radius:50%;"></div>
<svg class="b" style="left:306px;top:736px;" width="24" height="24" viewBox="0 0 24 24"><path d="M1.5 12 C2 4 8 0.5 13 0.5 C19 0.5 23.5 5 23.5 12 V14.5 H8.5 C8.5 19 14 20.5 21.5 17.5 V22 C12 26 2.5 22 2.5 13.5 C3 9 6 6.5 9 6 C7 8 7 9.5 7 10 H16.5 C16.5 5 11 3 6 6 C4 7.5 2.5 9.5 1.5 12 Z" fill="#1478d4"/></svg>
<svg class="b" style="left:354px;top:736px;" width="25" height="25" viewBox="0 0 25 25"><circle cx="12.5" cy="12.5" r="10.3" fill="none" stroke="#fff" stroke-width="3.6"/><circle cx="12.5" cy="12.5" r="4" fill="none" stroke="#fff" stroke-width="2.6"/><path d="M17 8 L22 3" stroke="#1d1d1d" stroke-width="2.5"/></svg>
<svg class="b" style="left:404px;top:737px;" width="26" height="22" viewBox="0 0 26 22"><path d="M1 16 L13 6.5 H7 V3.8 H15 L13 1.5 L15 0 L25 10 C26.5 16 22 21.5 16 21.5 C11 21.5 8 18 8 15 L4 18.5 Z" fill="#ea7600"/><circle cx="16.5" cy="13.5" r="5" fill="#fff"/><circle cx="16.5" cy="13.5" r="2.8" fill="#265787"/></svg>
<div class="b" style="left:454px;top:736px;width:24px;height:24px;background:#2b3d4f;"></div>
<svg class="b" style="left:454px;top:736px;" width="24" height="24" viewBox="0 0 24 24"><path d="M5.5 16.2 L13.9 9.1 L18.7 12.9 L10.6 20.1 Z" fill="#4fe0c4"/><path d="M9.5 4.6 L12.6 7.4 L9.5 10.2 L6.4 7.4 Z" fill="#fff"/><path d="M0 16 L8 24 H0 Z" fill="#1f3040"/></svg>
<svg class="b" style="left:502px;top:735px;" width="24" height="26" viewBox="0 0 24 26"><path d="M8 1 L22 3 L19 24 L3 21 Z" fill="#bfe3f2" stroke="#8fb8cc" stroke-width="0.8"/><path d="M8 1 L22 3 L21.5 6 L7.2 4 Z" fill="#e8f5fb"/><path d="M19 24 L22 3 L23.5 6 L21 25 Z" fill="#c9b46a"/><path d="M7 8 L19 10 M6.5 12 L18.5 14 M6 16 L18 18" stroke="#9ccbe0" stroke-width="0.8"/></svg>
<svg class="b" style="left:552px;top:736px;" width="24" height="24" viewBox="0 0 24 24"><path d="M12.5 1 L22 6.5 V17.5 L12.5 23 L3 12 Z" fill="#fff"/><path d="M12.5 12 V23 M12.5 12 L22 6.5 M12.5 12 L3 12" stroke="#1d1d1d" stroke-width="2"/><path d="M3 12 L12.5 1 L9 9 Z" fill="#1d1d1d"/><path d="M0 12 L6 5 V19 Z" fill="#1d1d1d"/><path d="M1.5 12 L7 6.5 L7 17.5 Z" fill="#fff"/></svg>
<div class="b" style="left:600px;top:736px;width:24px;height:24px;background:#4b4b4b;border-radius:2px;"></div>
<svg class="b" style="left:600px;top:736px;" width="24" height="24" viewBox="0 0 24 24"><path d="M6 8.5 L18 4.5 V9 L11 11.5 L18 14 V18.5 L6 22 V17.5 L13 15 L6 12.5 Z" fill="#ff9800" transform="translate(0,-1.5)"/></svg>
<svg class="b" style="left:648px;top:735px;" width="30" height="30" viewBox="0 0 30 30"><circle cx="12" cy="12" r="11.5" fill="#fff"/><path d="M12 0.5 A11.5 11.5 0 0 1 22 6.2 H12 A5.8 5.8 0 0 0 6.9 9.2 L2.2 6 A11.5 11.5 0 0 1 12 0.5 Z" fill="#ea4335"/><path d="M22 6.2 A11.5 11.5 0 0 1 11.5 23.5 L16.6 15 A5.8 5.8 0 0 0 16.5 8 Z" fill="#fbbc05"/><path d="M2.2 6 L6.9 15 A5.8 5.8 0 0 0 12 17.8 L11.5 23.5 A11.5 11.5 0 0 1 2.2 6 Z" fill="#34a853"/><circle cx="12" cy="12" r="4.6" fill="#4285f4" stroke="#fff" stroke-width="1.2"/><circle cx="20" cy="21" r="8" fill="#d8c8b0" stroke="#1d1d1d" stroke-width="1"/><path d="M15 25 Q20 17 25 25 Q20 30 15 25 Z" fill="#222"/><circle cx="20" cy="18.5" r="3" fill="#3a2a20"/></svg>
<div class="b" style="left:641px;top:766px;width:40px;height:2px;background:#76b9ed;"></div>
<svg class="b" style="left:699px;top:736px;" width="24" height="24" viewBox="0 0 24 24"><ellipse cx="12" cy="12" rx="11.5" ry="11.8" fill="#e0121c"/><ellipse cx="12" cy="12" rx="5" ry="8.6" fill="#1d1d1d"/></svg>
<svg class="b" style="left:748px;top:736px;" width="24" height="24" viewBox="0 0 24 24"><circle cx="12" cy="12" r="11.5" fill="#5a8de0"/><path d="M12 0.5 A11.5 11.5 0 0 1 22 6.2 H12 Z" fill="#7ea6ea"/><path d="M2 6 L7 15 L12 23.5 A11.5 11.5 0 0 1 2 6 Z" fill="#3f73cf"/><circle cx="12" cy="12" r="5" fill="#4f86e8" stroke="#dfe9fb" stroke-width="1.6"/></svg>
<svg class="b" style="left:796px;top:736px;" width="24" height="24" viewBox="0 0 24 24"><circle cx="12" cy="12" r="11.5" fill="#3f7be0"/><path d="M22.5 7 A11.5 11.5 0 0 1 19 21 L14 12 Z" fill="#f6c026"/><circle cx="12" cy="12" r="5" fill="#34a06a" stroke="#fff" stroke-width="1.6"/></svg>
<div class="b" style="left:833px;top:728px;width:48px;height:40px;background:#424242;"></div>
<div class="b" style="left:833px;top:766px;width:48px;height:2px;background:#76b9ed;"></div>
<svg class="b" style="left:843px;top:736px;" width="27" height="25" viewBox="0 0 27 25"><rect x="8" y="0.5" width="18" height="23" rx="1.5" fill="#21a366"/><rect x="17" y="0.5" width="9" height="6" fill="#33c481"/><rect x="8" y="6.5" width="9" height="6" fill="#107c41"/><rect x="17" y="12.5" width="9" height="5.5" fill="#107c41"/><rect x="8" y="12.5" width="9" height="11" fill="#185c37"/><rect x="0" y="5" width="14" height="14" rx="1.2" fill="#107c41"/><path d="M4 8.5 L10 15.5 M10 8.5 L4 15.5" stroke="#fff" stroke-width="1.8"/></svg>
<svg class="b" style="left:1142px;top:743px;" width="12" height="7" viewBox="0 0 12 7"><path d="M0.8 6.2 L6 1 L11.2 6.2" fill="none" stroke="#fff" stroke-width="1.3"/></svg>
<svg class="b" style="left:1162px;top:741px;" width="18" height="12" viewBox="0 0 18 12"><rect x="5.5" y="2.5" width="11" height="7" fill="none" stroke="#fff" stroke-width="1.1"/><rect x="7" y="4" width="5" height="4" fill="#fff"/><path d="M17 4.5 V7.5" stroke="#fff" stroke-width="1.4"/><path d="M2 0 V2.5 M4 0 V2.5 M0.8 2.5 H5.2 V5 Q5.2 6.5 3 6.5 Q0.8 6.5 0.8 5 Z M3 6.5 V10" stroke="#fff" stroke-width="0.9" fill="none"/></svg>
<svg class="b" style="left:1189px;top:741px;" width="15" height="13" viewBox="0 0 15 13"><g fill="none" stroke="#fff" stroke-width="1.2"><path d="M1 12.5 A11.5 11.5 0 0 1 12.5 1" opacity=".55"/><path d="M4.5 12.5 A8 8 0 0 1 12.5 4.5"/><path d="M8 12.5 A4.5 4.5 0 0 1 12.5 8"/></g><circle cx="12" cy="12" r="1.4" fill="#fff"/></svg>
<div class="t" style="left:1213px;top:733px;font-size:12px;color:#fff;letter-spacing:-0.2px;">ENG</div>
<div class="t" style="left:1219px;top:751px;font-size:12px;color:#fff;letter-spacing:-0.2px;">US</div>
<div class="t" style="left:1253px;top:733px;font-size:12px;color:#fff;letter-spacing:-0.35px;">10:25 AM</div>
<div class="t" style="left:1249px;top:751px;font-size:12px;color:#fff;letter-spacing:-0.5px;">19/08/2021</div>
<svg class="b" style="left:1325px;top:739px;" width="26" height="26" viewBox="0 0 26 26"><path d="M0.5 0.5 H17.5 V13 H5 L0.5 17 Z" fill="#fff"/><path d="M3.5 4 H14.5 M3.5 6.8 H14.5 M3.5 9.6 H14.5" stroke="#1d1d1d" stroke-width="1"/><circle cx="16" cy="17" r="7.5" fill="#1d1d1d" stroke="#d0d0d0" stroke-width="1.1"/></svg>
<div class="t" style="left:1333px;top:750px;font-size:11.5px;color:#fff;width:16px;text-align:center;">3</div>
</body></html>
